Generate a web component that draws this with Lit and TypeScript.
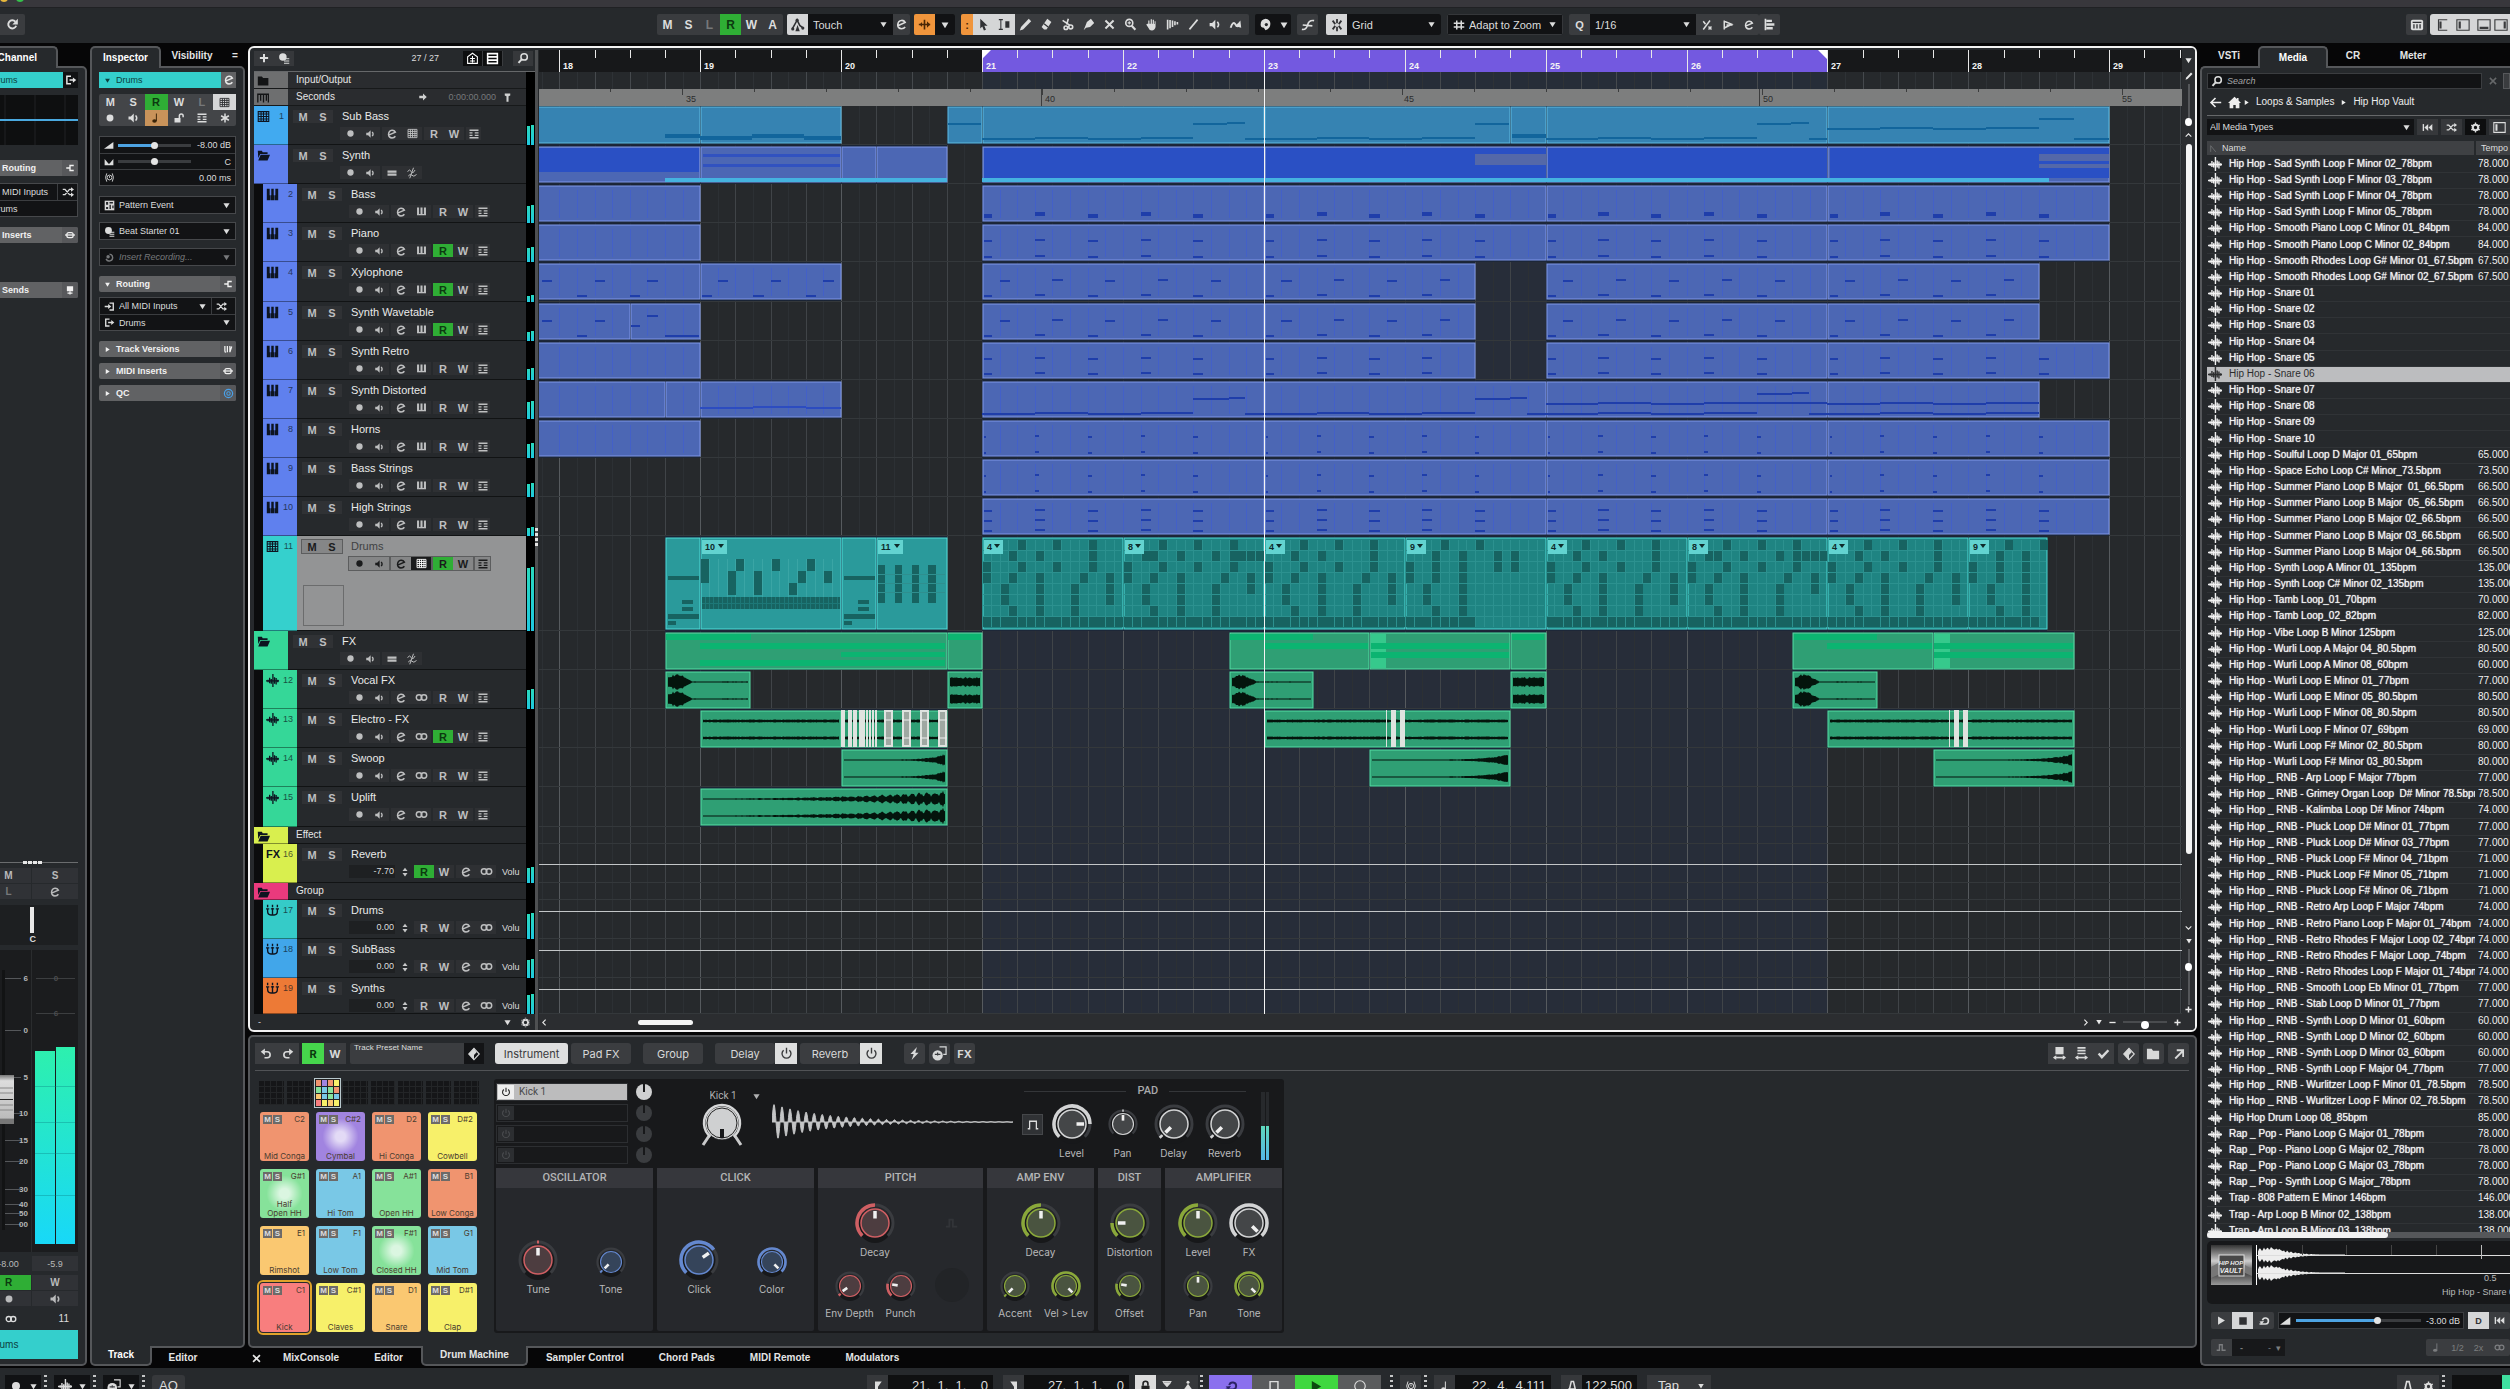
import { LitElement, html, svg, css, nothing } from "lit";
import { customElement } from "lit/decorators.js";
import { classMap } from "lit/directives/class-map.js";
import { styleMap } from "lit/directives/style-map.js";

/* ---------- icons: 16 x 16 artboard, painted in currentColor ---------- */
const st = "fill:none;stroke:currentColor;stroke-width:2";
const st1 = "fill:none;stroke:currentColor;stroke-width:1.3";
const ICONS: Record<string, any> = {
  rec: svg`<circle cx="8" cy="8" r="4.6"/>`,
  speaker: svg`<path d="M2 6h3l4-4v12l-4-4H2z"/><path d="M11.5 4.5q3 3.500 0 7" style=${st}/>`,
  edit: svg`<path d="M3.500 9.500L12.500 5.500Q11 2.800 8 3Q3.600 3.500 3.400 8.500Q3.600 13 8 13.200Q11 13.200 12.500 11" style=${st}/>`,
  keys: svg`<path d="M3 2v10.500M8 2v10.500M13 2v10.500" style="stroke:currentColor;stroke-width:3"/><path d="M1.500 12.500h13" style="stroke:currentColor;stroke-width:2"/>`,
  piano: svg`<path d="M1 1h3.500v8h.8v6H1zM6.500 1h3v8h.8v6H5.800V9h.7zM11.500 1H15v14h-4.200V9h.7z"/>`,
  grid: svg`<path d="M1.500 2h13v12h-13zM1.500 5h13M1.500 8h13M1.500 11h13M5 2v12M8 2v12M11.500 2v12" style=${st1}/>`,
  lanes: svg`<path d="M2 3h12M2 13h12M2 6.500h4M9 6.500h5M2 9.800h4M9 9.800h5" style="fill:none;stroke:currentColor;stroke-width:1.700"/>`,
  eq: svg`<path d="M2 6h12M2 10h12" style="stroke:currentColor;stroke-width:3"/>`,
  flow: svg`<path d="M2 6q3-4 5 0t5-2M3 12q3-4 5-1t6-1M10 1l-5 14" style=${st1}/>`,
  link: svg`<circle cx="5" cy="8" r="3.400" style="fill:none;stroke:currentColor;stroke-width:1.800"/><circle cx="11" cy="8" r="3.400" style="fill:none;stroke:currentColor;stroke-width:1.800"/>`,
  wave: svg`<path d="M0 8.500h16M2.500 7v3M4.500 4.500v7M6.500 6v6M8.500 0v16M10.500 4v8M12.500 5v8M14.500 7v3" style="fill:none;stroke:currentColor;stroke-width:1.600"/>`,
  fader: svg`<path d="M2 6v3q0 4.500 4 4.500h4q4 0 4-4.500V6M8 5v8M2 1v3M8 1v3M14 1v3M0 6h4M6 6h4M12 6h4" style="fill:none;stroke:currentColor;stroke-width:1.700"/>`,
  folder: svg`<path d="M1 3h5l1.500 2H14v9H1z"/>`,
  open: svg`<path d="M1 2h5l1 2h6v2H4l-2.500 5z"/><path d="M4.500 7H16l-3 7H1.500z"/>`,
  ruler: svg`<path d="M1 14V4h13v10M4.500 4v8M8 4v10M11.500 4v8" style="fill:none;stroke:currentColor;stroke-width:1.600"/>`,
  plus: svg`<path d="M8 2.500v11M2.500 8h11" style="stroke:currentColor;stroke-width:2.600"/>`,
  minus: svg`<path d="M2.500 8h11" style="stroke:currentColor;stroke-width:2.400"/>`,
  palette: svg`<circle cx="6.500" cy="6.500" r="5"/><path d="M8 9h7M8 12h7M8 15h7" style="stroke:currentColor;stroke-width:1.600"/>`,
  home: svg`<path d="M8 1L0 8.500h2V15h4.500v-4h3v4H14V8.500h2L13 5.600V2.500h-2v1.300z"/>`,
  house: svg`<path d="M8 1.500L2 6v8h12V6zM5 8h6M5 11h6M8 5v8" style=${st1}/>`,
  list: svg`<path d="M2 2h12v12H2zM2 6h12M2 10h12" style="fill:none;stroke:currentColor;stroke-width:1.900"/>`,
  search: svg`<circle cx="9.500" cy="6.500" r="4.300" style=${st}/><path d="M6.500 9.500L2 14.500" style="stroke:currentColor;stroke-width:2.600"/>`,
  zoomg: svg`<circle cx="6.500" cy="6" r="4.300" style=${st}/><path d="M9.500 9.500L14 14.500" style="stroke:currentColor;stroke-width:2.600"/><path d="M6.500 4v4M4.500 6h4" style=${st1}/>`,
  right: svg`<path d="M2 6h6V2.500L14 8l-6 5.500V10H2z"/>`,
  tee: svg`<path d="M4 2h8v3l-2.500 1v8h-3V6L4 5z"/>`,
  redo: svg`<path d="M12.500 9.500A5 5 0 1 1 11.500 4.500" style="fill:none;stroke:currentColor;stroke-width:2.400"/><path d="M14.500 1v7H7.800z"/>`,
  undoA: svg`<path d="M4 5h5.500a3.600 3.600 0 0 1 0 8H6" style="fill:none;stroke:currentColor;stroke-width:2.200"/><path d="M6.500 .5v9L1 5z"/>`,
  redoA: svg`<path d="M12 5H6.500a3.600 3.600 0 0 0 0 8H10" style="fill:none;stroke:currentColor;stroke-width:2.200"/><path d="M9.500 .5v9L15 5z"/>`,
  out: svg`<path d="M8 3H2.500v10H8M6 8h6" style=${st}/><path d="M10.500 4.500L15 8l-4.500 3.500z"/>`,
  inn: svg`<path d="M8 3h5.500v10H8M1 8h6" style=${st}/><path d="M6 4.500L10.500 8 6 11.500z"/>`,
  shuffle: svg`<path d="M1 4.500h3l6 7h3M1 11.500h3l6-7h3" style="fill:none;stroke:currentColor;stroke-width:1.800"/><path d="M12 1.500L16 4.500l-4 3zM12 8.500l4 3-4 3z"/>`,
  split: svg`<path d="M14 4H8v8h6M8 8H2" style="fill:none;stroke:currentColor;stroke-width:2.200"/>`,
  insert: svg`<rect x="3" y="4" width="10" height="8" rx="3" style=${st}/><path d="M0 8h16" style=${st}/>`,
  send: svg`<path d="M3 2h10v8H3z"/><path d="M4 13h8M8 10v5" style=${st}/>`,
  bars: svg`<path d="M3 3v8q0 2 2 2M7 3v10M11 3v10l3-9" style=${st}/>`,
  ring: svg`<circle cx="8" cy="8" r="6" style="fill:none;stroke:#4aa0e8;stroke-width:1.800"/><circle cx="8" cy="8" r="2.500" style="fill:none;stroke:#4aa0e8;stroke-width:1.500"/>`,
  note: svg`<ellipse cx="6" cy="12" rx="3" ry="2.200"/><path d="M8.500 12V2" style=${st1}/>`,
  unlock: svg`<path d="M2 8h8v6H2z"/><path d="M8.500 8V5a2.500 2.500 0 0 1 5 0v2" style=${st}/>`,
  lock: svg`<path d="M3 7h10v8H3z"/><path d="M5 7V4.500a3 3 0 0 1 6 0V7" style=${st}/>`,
  star: svg`<path d="M8 2v12M2.800 5l10.400 6M2.800 11l10.400-6" style=${st}/>`,
  ramp: svg`<path d="M0 14L15 3v11z"/>`,
  pan: svg`<path d="M1 3l5 6v4H1zM15 3v10h-5V9zM6 13V9l2 2 2-2v4z"/>`,
  delay: svg`<circle cx="8" cy="8" r="3.500" style=${st1}/><path d="M8 6v2.500M4 2Q.5 8 4 14M12 2q3.500 6 0 12" style=${st1}/>`,
  pattern: svg`<path d="M1 1h14v14H1z" style="fill:#d8d8d8"/><path d="M3 3h3v4H3zM8 3h5v2H8zM8 7h2v6H8zM3 10h3v3H3zM12 8h2v4h-2z" style="fill:#26282b"/>`,
  clock: svg`<path d="M8 3a5 5 0 1 1-5 7" style=${st}/><circle cx="6" cy="7" r="2.500"/>`,
  caret: svg`<path d="M2.500 4h11L8 13z"/>`,
  caretR: svg`<path d="M4 2.500v11L13 8z"/>`,
  auto: svg`<path d="M1.500 12.500L7 2.500l3 6 4 3" style="fill:none;stroke:currentColor;stroke-width:1.800"/><circle cx="7" cy="2.500" r="1.800"/><circle cx="2" cy="12.500" r="1.800"/><circle cx="13.500" cy="11.500" r="1.800"/><path d="M5 15l2.500-7L10 15z"/>`,
  scroll: svg`<path d="M1 8h14M8 2v12" style="stroke:currentColor;stroke-width:2"/><path d="M11 4l4 4-4 4zM5 5L2 8l3 3z"/>`,
  cursor: svg`<path d="M4 1l9 8.500H9l2 5-2.500 1-2-5L4 13z"/>`,
  range: svg`<path d="M1 2h5M1 14h5M3.500 2v12" style=${st1}/><path d="M9 4h5v8H9z"/>`,
  pencil: svg`<path d="M12 1l3 3L5 14l-4 1.500L2.500 11z"/>`,
  eraser: svg`<path d="M9 1l5 4-6 9H5L2 11z"/><path d="M5 7l5 4" stroke="#303235" stroke-width="1.500"/>`,
  scissors: svg`<path d="M2 3l9 6M9 1L7 8" style=${st}/><circle cx="12" cy="11" r="2.400" style=${st}/><circle cx="6" cy="12" r="2.200" style=${st}/>`,
  glue: svg`<path d="M11 1l4 5-5 5-5 1-3 3 2-5 2-5z"/>`,
  cross: svg`<path d="M3 3l10 10M13 3L3 13" style="stroke:currentColor;stroke-width:2.400"/>`,
  hand: svg`<path d="M4 7V3h1.500v4H7V1.500h1.500V7h1V2H11v5.500h.8V4H13v7q-1 4-4.500 4.500Q5 15 3.500 11L1.500 8 3 7z"/>`,
  comb: svg`<path d="M2 2v12M5 2.500v10M8 3v8M11 4v5M14 5v3" style=${st}/>`,
  line: svg`<path d="M3 14L13 2" style=${st}/>`,
  scrub: svg`<path d="M2 12q3-9 6-4t3-1" style="fill:none;stroke:currentColor;stroke-width:2.400"/><path d="M8 10l6-7 1 9z"/>`,
  drop: svg`<path d="M8 1Q2 2 2 8q0 4 4 4l2 3q6-2 6-8 0-5-6-6z"/><circle cx="9" cy="8" r="2" style="fill:#26282b"/>`,
  curve: svg`<path d="M1 13q5 1 6.500-5T15 3M2 8l11 1" style="fill:none;stroke:currentColor;stroke-width:1.800"/>`,
  snap: svg`<path d="M8 1v5M8 10v5M3 3l3 4M13 3l-3 4M3 13l3-4M13 13l-3-4" style=${st}/>`,
  hash: svg`<path d="M5 2v12M11 2v12M1 5.500h14M1 10.500h14" style=${st}/>`,
  frac: svg`<path d="M3 14L12 2M3 3l3 4M10 10l4 4M14 10l-4 4" style=${st}/>`,
  flag: svg`<path d="M3 2v12M3 3l10 4-10 5M6 8h8" style=${st}/>`,
  align: svg`<path d="M3 1v14" style=${st}/><path d="M4 2h7v3H4zM4 6.500h10v3H4zM4 11h8v3H4z"/>`,
  keyboard: svg`<rect x="1" y="2" width="14" height="12" rx="2"/><path d="M4.500 7v5M8 7v5M11.500 7v5M3 5h10" stroke="#303235" stroke-width="1.500"/>`,
  z1: svg`<path d="M14 2H4v12h10" style=${st1}/><path d="M5 4h2.500v8H5z"/>`,
  z2: svg`<path d="M1 2h14v12H1z" style=${st1}/><path d="M3 4h2.500v8H3z"/>`,
  z3: svg`<path d="M1 2h14v12H1z" style=${st1}/><path d="M3 10h10v2.500H3z"/>`,
  z4: svg`<path d="M1 2h14v12H1z" style=${st1}/><path d="M11 4h2.500v8H11z"/>`,
  back: svg`<path d="M8 2.500L2.500 8 8 13.500M3 8h12" style=${st}/>`,
  gear: svg`<circle cx="8" cy="8" r="4" style="fill:none;stroke:currentColor;stroke-width:3.200"/><path d="M8 .8v3M8 12.200v3M1.800 4.400l2.600 1.500M11.600 10.100l2.600 1.500M1.800 11.600l2.600-1.500M11.600 5.900l2.600-1.500" style=${st}/>`,
  rew: svg`<path d="M2 3v10" style=${st}/><path d="M9 3v10L3.500 8zM15 3v10L9.500 8z"/>`,
  sort: svg`<path d="M3 14V3l9 11" style=${st1}/>`,
  play: svg`<path d="M3 2v12l10-6z"/>`,
  stop: svg`<path d="M3 3h10v10H3z"/>`,
  loop: svg`<path d="M2 12h8a4 4 0 1 0-4-5" style="fill:none;stroke:currentColor;stroke-width:2.200"/><path d="M8 8l-6 .5 3 4z"/>`,
  steps: svg`<path d="M1 12h4V4h4v8h5" style=${st}/>`,
  power: svg`<path d="M4.500 4a5.500 5.500 0 1 0 7 0M8 1v7" style="fill:none;stroke:currentColor;stroke-width:1.700"/>`,
  bolt: svg`<path d="M11 0L3 8.500h4L4.500 16 13 7H9z"/>`,
  disc: svg`<circle cx="6" cy="10" r="5.500"/><path d="M8 1h7v8h-3" style=${st1}/><path d="M6 7v3M3 9h6" stroke="#3b3d40" stroke-width="1.300"/>`,
  cube: svg`<path d="M8 1.500l6 6.500-6 6.500L2 8z" style=${st1}/><path d="M8 1.500L2 8l6 6.500V9l3-3z"/>`,
  fit1: svg`<path d="M3 0h10v9H3z"/><path d="M1 13h14" style=${st}/><path d="M4 10v6l-4-3zM12 10v6l4-3z"/>`,
  fit2: svg`<path d="M3 1h10M3 4.500h10M3 8h10" style=${st}/><path d="M1 13h14" style=${st}/><path d="M4 10v6l-4-3zM12 10v6l4-3z"/>`,
  check: svg`<path d="M2 8l4 4.500L14 4" style="fill:none;stroke:currentColor;stroke-width:3"/>`,
  arrowNE: svg`<path d="M3 14L13 4M5 3h8.500v9" style="fill:none;stroke:currentColor;stroke-width:2.400"/>`,
  pulse: svg`<path d="M1 13h2.500V3h9v10H15" style="fill:none;stroke:currentColor;stroke-width:1.700"/>`,
  updown: svg`<path d="M4 6.500L8 1l4 5.500zM4 9.500L8 15l4-5.500z"/>`,
  lt: svg`<path d="M10 3L5 8l5 5" style=${st}/>`,
  gt: svg`<path d="M6 3l5 5-5 5" style=${st}/>`,
  up: svg`<path d="M3 10l5-5 5 5" style=${st}/>`,
  down: svg`<path d="M3 6l5 5 5-5" style=${st}/>`,
  locL: svg`<path d="M4 2h9L8 9v6H4z"/>`,
  locR: svg`<path d="M12 2H3l5 7v6h4z"/>`,
  hour: svg`<path d="M2 2h12M3 3l5 6 5-6z" style=${st1}/><path d="M3 4h10L8 9z"/>`,
  man: svg`<circle cx="8" cy="3" r="2"/><path d="M8 5l5 7H3z"/>`,
  circ: svg`<circle cx="8" cy="8" r="6" style=${st1}/>`,
  metro: svg`<path d="M4 15L7 2h3l3 13M3 12h10" style=${st}/>`,
};
const ic = (name: string, size = 12) =>
  html`<svg class="ic" width=${size} height=${size} viewBox="0 0 16 16" fill="currentColor" aria-hidden="true">${ICONS[name]}</svg>`;

/* ---------- tracks ---------- */
type Track = { n?: number; name: string; icon: string; color: string; h: number; lvl: number; kind: string; on?: boolean; val?: string; m?: number; mid?: string };
const T = (n: number | undefined, name: string, icon: string, color: string, kind: string, m = 0, o: Partial<Track> = {}): Track => ({ n, name, icon, color, h: 39, lvl: 1, kind, m, ...o });
const BL = "#5f80ee", GN = "#35d798";
const TRACKS: Track[] = [
  T(1, "Sub Bass", "grid", "#41aaf0", "inst", 20, { lvl: 0, mid: "grid" }),
  T(undefined, "Synth", "open", BL, "folder", 0, { lvl: 0 }),
  T(2, "Bass", "piano", BL, "inst", 18),
  T(3, "Piano", "piano", BL, "inst", 15, { on: true }),
  T(4, "Xylophone", "piano", BL, "inst", 7, { on: true, h: 40 }),
  T(5, "Synth Wavetable", "piano", BL, "inst", 10, { on: true }),
  T(6, "Synth Retro", "piano", BL, "inst", 12),
  T(7, "Synth Distorted", "piano", BL, "inst", 18),
  T(8, "Horns", "piano", BL, "inst", 15),
  T(9, "Bass Strings", "piano", BL, "inst", 14),
  T(10, "High Strings", "piano", BL, "inst", 9),
  T(11, "Drums", "grid", "#35d0cd", "inst", 64, { on: true, h: 95, mid: "grid" }),
  T(undefined, "FX", "open", GN, "folder", 0, { lvl: 0 }),
  T(12, "Vocal FX", "wave", GN, "audio", 20),
  T(13, "Electro - FX", "wave", GN, "audio", 0, { on: true }),
  T(14, "Swoop", "wave", GN, "audio"),
  T(15, "Uplift", "wave", GN, "audio", 0, { h: 40 }),
  T(undefined, "Effect", "open", "#d9ef4e", "head", 0, { lvl: 0, h: 17 }),
  T(16, "Reverb", "FX", "#d9ef4e", "bus", 16, { on: true, val: "-7.70" }),
  T(undefined, "Group", "open", "#ea3a7d", "head", 0, { lvl: 0, h: 17 }),
  T(17, "Drums", "fader", "#35cbc8", "bus", 26, { val: "0.00" }),
  T(18, "SubBass", "fader", "#41a6ea", "bus", 19, { val: "0.00" }),
  T(19, "Synths", "fader", "#ed7a36", "bus", 20, { val: "0.00", h: 36 }),
];

/* ---------- timeline ---------- */
const BAR = 141;
const X = (b: number) => Math.round((b - 21) * (BAR - 0.1) + 443);
const START = 17.84;
const rect = (b0: number, b1: number, y: number, h: number, fill: string) =>
  svg`<rect x=${X(b0)} y=${y} width=${Math.max(1, X(b1) - X(b0))} height=${h} fill=${fill}></rect>`;
const clip = (b0: number, b1: number, fill: string, line: string, y = 2, h = 35) => svg`
  <rect x=${X(b0)} y=${y - 2} width=${X(b1) - X(b0)} height=${h + 4} fill="#182338" opacity=".8"></rect>
  <rect x=${X(b0) + 1} y=${y} width=${X(b1) - X(b0) - 1} height=${h} fill=${fill} stroke=${line}></rect>`;
const range = (a: number, b: number, s: number) => {
  const r: number[] = [];
  for (let v = a; v < b - 0.001; v += s) r.push(v);
  return r;
};
const FOUR = [[21, 23], [23, 25], [25, 27], [27, 29]];
const SHORT = [[21, 23], [23, 24.5], [25, 27], [27, 28.5]];
const RETRO = [[21, 23], [23, 24.5], [25, 27], [27, 29]];
const BF = "#4c67b4", BLN = "#7f97e8", NOTE = "#1f3eaa";
const blueClips = (list: number[][]) => list.map(([a, b]) => svg`${clip(a, b, BF, BLN)}
  ${range(Math.ceil(a * 8) / 8 + 0.125, b, 0.125).map((v) => svg`<rect x=${X(v)} y="6" width="1" height="28" fill="#4360c8"></rect>`)}`);
const notes = (list: number[][], offs: number[], ys: number[], w: number, h: number) =>
  list.map(([a, b]) => offs.filter((o) => a + o < b - 0.01).map((o, i) => ys.map((y) =>
    rect(a + o + (o === 0 ? 0.015 : 0), a + o + w, y - (i % 2) + (h > 3 && i % 2 ? -1 : 0), h, NOTE))));
const HITS = [0, 0.375, 0.75, 1.125, 1.5];
const UPS = [0.125, 0.5, 0.875, 1.25, 1.625];

const stepLine = (a: number, y: number, h: number, fill: string, n = 4) =>
  range(0, n, 1).map((i) => rect(a + i * 0.375, a + (i + 1) * 0.375, y - (i % 2), h, fill));

const PAT: Record<string, number[][]> = {
  "4": [[4, 8, 12], [3, 6, 12], [0, 4, 8, 12], [0, 3, 6, 11, 14], [2, 6, 10, 14], [2, 6, 10, 14], [3, 6, 10], range(0, 16, 1)],
  "8": [[4, 8, 12], [2, 3, 6, 10, 12, 13, 14, 15], [0, 4, 8, 12], [0, 3, 6, 11, 14], [2, 6, 10, 14], [2, 6, 10], [3, 6, 10], range(0, 16, 1)],
  "9": [[4, 8], [3, 6, 10, 12], [0, 3, 6, 10, 12], [0, 3, 6], [2, 6], [2, 6], [3, 6], range(0, 8, 1)],
};
const CY = "#4fdcd8", DK = "#176361";
const badge = (b: number, t: string) => svg`
  <rect x=${X(b) + 2} y="4" width=${t.length > 1 ? 25 : 19} height="14" fill="#62d3d0"></rect>
  <text x=${X(b) + 5} y="14" class="patno">${t}</text>
  <path d="M${X(b) + (t.length > 1 ? 18 : 12)} 8h6l-3 4z" fill="#0e2a2a"></path>`;
const pattern = (a: number, b: number, t: string) => svg`
  ${clip(a, b, "#1f8482", CY, 2, 91)}
  ${range(0, (b - a) * 16, 1).map((i) => svg`<rect x=${X(a + i / 16)} y="4" width="1" height="87" fill="#2c918f"></rect>`)}
  ${range(1, 8, 1).map((r) => rect(a + 0.01, b - 0.01, 3 + r * 11, 1, "#2c918f"))}
  ${PAT[t].map((cols, r) => cols.filter((c) => a + c / 16 < b - 0.03).map((c) =>
    svg`<rect x=${X(a + c / 16) + 1} y=${4 + r * 11} width="8" height="10" fill=${DK}></rect>`))}
  ${badge(a, t)}`;
const mini = (a: number) => svg`
  ${clip(a, a + 0.25, "#2a9a9b", CY, 2, 91)}
  ${rect(a + 0.02, a + 0.24, 40, 4, DK)}${rect(a + 0.12, a + 0.2, 64, 4, DK)}${rect(a + 0.12, a + 0.2, 71, 4, DK)}
  ${rect(a + 0.02, a + 0.24, 78, 5, DK)}${rect(a + 0.02, a + 0.08, 85, 4, DK)}`;

const rnd = (i: number) => { const v = Math.sin(i * 91.7 + 4.1) * 4375.85; return v - Math.floor(v); };
/* symmetric waveform around y, following an envelope of the position 0..1 */
const wavePath = (x0: number, x1: number, y: number, env: (t: number) => number) => {
  const top: string[] = [], bot: string[] = [];
  for (let x = x0; x <= x1; x++) {
    const a = Math.max(0.5, env((x - x0) / (x1 - x0)) * (0.65 + 0.35 * rnd(x)));
    top.push(`${x} ${(y - a).toFixed(1)}`);
    bot.unshift(`${x} ${(y + a).toFixed(1)}`);
  }
  return `M${top.join("L")}L${bot.join("L")}z`;
};
const GF = "#2f9f74", GL = "#55dfa4", BRT = "#0cb471";
const audio = (a: number, b: number, env: (t: number) => number) => svg`
  ${clip(a, b, GF, GL, 2, 36)}
  <path d=${wavePath(X(a) + 3, X(b) - 2, 12, env)} fill="#04140c"></path>
  <path d=${wavePath(X(a) + 3, X(b) - 2, 29, env)} fill="#04140c"></path>`;
const hit = (t: number) => (t < 0.05 ? 5 : t < 0.15 ? 8 : t < 0.3 ? 8 - (t - 0.15) * 46 : 0.7);
const flat = () => 1.6;
const solid = () => 5;
const rise = (t: number) => 0.6 + 6 * Math.pow(t, 7);
const saw = (t: number) => 0.6 + 8 * Math.pow(t, 2.2) * (0.35 + 0.65 * Math.abs(Math.sin(t * 100)));
const stripe = (x: number, w: number) => svg`<rect x=${x} y="1" width=${w} height="37" fill="#dfe3df"></rect>${w > 5 ? svg`<rect x=${x + 2} y="3" width=${w - 4} height="33" fill="#9fa8a2"></rect><path d="M${x} 11h${w}M${x} 29h${w}" stroke="#eee"></path>` : nothing}`;

const LANES: Record<string, () => any> = {
  "Sub Bass1": () => [
    ...[[START, 19], [19, 20], [20.75, 21], [21, 23], [23, 24.75], [24.75, 25], [25, 27], [27, 29]].map(([a, b]) => clip(a, b, "#3683b2", "#5fbbe2", 1, 36)),
    rect(18.75, 19, 28, 4, "#12659c"), rect(19, 19.37, 30, 4, "#12659c"), rect(19.37, 19.74, 28, 4, "#12659c"), rect(19.74, 20, 30, 4, "#12659c"),
    rect(20.76, 20.99, 17, 2, "#12659c"),
    [21, 23, 25].map((b) => svg`${stepLine(b, 32, 2, "#12659c")}${rect(b + 1.5, b + 1.74, 17, 2, "#12659c")}${b === 23 ? rect(24.76, 25, 28, 4, "#12659c") : svg`${rect(b + 1.74, b + 1.87, 16, 2, "#12659c")}${rect(b + 1.87, b + 2, 32, 2, "#12659c")}`}`),
    stepLine(27, 22, 2, "#12659c"), rect(28.5, 28.75, 12, 2, "#12659c"), rect(28.75, 29, 32, 2, "#12659c"),
  ],
  Synth: () => [
    ...[[START, 19], [19, 20], [20, 20.25], [20.25, 20.75], ...FOUR].map(([a, b]) => clip(a, b, BF, BLN)),
    rect(START, 18.99, 3, 24, "#2a50c4"),
    rect(19.02, 19.99, 9, 3, "#3152c0"), rect(19.02, 19.99, 19, 3, "#3152c0"),
    ...FOUR.map(([a, b]) => rect(a + 0.015, b, 3, 30, "#2a50c4")),
    rect(24.5, 25, 9, 11, "#5468a8"), rect(28.5, 29, 9, 7, "#5468a8"), rect(28.5, 29, 19, 4, "#5468a8"),
    rect(18.75, 20.75, 33, 4, "#45b3e0"), rect(21, 28.57, 33, 4, "#45b3e0"),
  ],
  Bass: () => [blueClips([[START, 19], ...FOUR]), notes(FOUR, HITS, [30], 0.072, 4)],
  Piano: () => [blueClips([[START, 19], ...FOUR]), notes(FOUR, HITS, [17, 33], 0.072, 2)],
  Xylophone: () => [blueClips([[START, 19], [19, 20], ...SHORT]), notes(SHORT, HITS, [33], 0.072, 2), notes(SHORT, UPS, [18], 0.072, 2),
    [17.875, 18.25, 18.625, 19.125, 19.5, 19.875].map((b) => rect(b, b + 0.075, 18, 2, NOTE)), [18.125, 18.5, 19.01, 19.375, 19.75].map((b) => rect(b, b + 0.075, 33, 2, NOTE))],
  "Synth Wavetable": () => [blueClips([[START, 18.5], [18.5, 19], ...SHORT]), notes(SHORT, HITS, [33], 0.072, 2), notes(SHORT, UPS, [18], 0.072, 2),
    [17.875, 18.25].map((b) => rect(b, b + 0.075, 18, 2, NOTE)), rect(18.125, 18.2, 33, 2, NOTE), rect(18.51, 18.57, 23, 2, NOTE), rect(18.625, 18.7, 13, 2, NOTE), rect(18.75, 18.99, 33, 2, NOTE)],
  "Synth Retro": () => [blueClips([[START, 19], ...RETRO]), notes(RETRO, HITS, [17, 32], 0.072, 2)],
  "Synth Distorted": () => [blueClips([[START, 18.75], [18.75, 19], [19, 20], [21, 23], [23, 25], [25, 27], [27, 28.5]]),
    stepLine(19, 27, 2, "#2c4cc0", 2), rect(19.75, 20, 27, 2, "#2c4cc0"),
    [21, 23].map((b) => [stepLine(b, 33, 2, NOTE), rect(b + 1.5, b + 1.75, 18, 2, NOTE), rect(b + 1.75, b + 1.87, 17, 2, NOTE), rect(b + 1.87, b + 2, 33, 2, NOTE)]),
    stepLine(25, 23, 2, NOTE), rect(26.5, 27, 22, 2, NOTE), stepLine(25, 33, 2, NOTE), rect(26.5, 26.75, 13, 2, NOTE), rect(26.75, 26.87, 12, 2, NOTE), rect(26.87, 27, 33, 2, NOTE),
    stepLine(27, 23, 2, NOTE), stepLine(27, 33, 2, NOTE)],
  Horns: () => [blueClips([[START, 19], ...FOUR]), notes(FOUR, HITS, [17, 33], 0.03, 2)],
  "Bass Strings": () => [blueClips(FOUR), notes(FOUR, HITS, [17, 33], 0.03, 2)],
  "High Strings": () => [blueClips(FOUR), notes(FOUR, HITS, [13, 23, 33], 0.072, 2)],
  Drums11: () => [
    mini(18.75),
    clip(19, 20, "#2a9a9b", CY, 2, 91),
    range(1, 16, 1).map((i) => svg`<rect x=${X(19 + i / 16)} y="23" width="1" height="50" fill="#3aa5a5"></rect>`),
    [[0, 4, 8, 12], [0, 3, 6, 11, 14], [3, 6, 10]].map((cols, r) => cols.map((c) => svg`<rect x=${X(19 + c / 16) + 1} y=${23 + r * 12} width="8" height="12" fill=${DK}></rect>`)),
    rect(19.015, 19.99, 61, 12, DK), range(1, 32, 1).map((i) => svg`<rect x=${X(19 + i / 32)} y="61" width="1" height="12" fill="#1d7777"></rect>`), rect(19.015, 19.99, 67, 1, "#1d7777"),
    badge(19, "10"), mini(20), clip(20.25, 20.75, "#2a9a9b", CY, 2, 91),
    [20.265, 20.38, 20.5, 20.62].map((b) => rect(b, b + 0.05, 29, 38, DK)), [38, 47, 56].map((y) => rect(20.26, 20.74, y, 1, "#2f8f8f")), badge(20.25, "11"),
    pattern(21, 22, "4"), pattern(22, 23, "8"), pattern(23, 24, "4"), pattern(24, 25, "9"), pattern(25, 26, "4"), pattern(26, 27, "8"), pattern(27, 28, "4"), pattern(28, 28.56, "9"),
  ],
  FX: () => [
    ...[[18.75, 20.75], [20.75, 21], [22.75, 23.75], [23.75, 24.75], [24.75, 25], [26.75, 27.75], [27.75, 28.75]].map(([a, b]) => clip(a, b, GF, GL, 2, 36)),
    rect(18.76, 19.36, 3, 6, BRT), rect(19, 20.74, 12, 6, BRT), rect(20, 20.74, 21, 5, BRT), rect(19, 20.74, 29, 6, BRT), rect(20.76, 20.99, 3, 6, BRT),
    [22.75, 26.75].map((b) => [rect(b + 0.01, b + 0.6, 3, 6, BRT), rect(b + 0.25, b + 0.99, 12, 6, BRT), rect(b + 1.01, b + 1.12, 3, 34, "#36c98c"), rect(b + 1.01, b + 1.99, 12, 6, BRT), rect(b + 1.01, b + 1.99, 21, 6, BRT)]),
    rect(24.76, 24.99, 3, 6, BRT),
  ],
  "Vocal FX": () => [audio(18.75, 19.35, hit), audio(20.75, 21, solid), audio(22.75, 23.35, hit), audio(24.75, 25, solid), audio(26.75, 27.35, hit)],
  "Electro - FX": () => [audio(19, 20, flat), audio(20, 20.75, flat),
    [0, 7, 12, 18, 22, 25, 28, 31, 34].map((d) => stripe(X(20) + d, d < 19 ? 4 : 2)), [43, 61, 79, 97].map((d) => stripe(X(20) + d, 9)),
    audio(23, 24.75, flat), audio(27, 28.75, flat), [24, 28].map((b) => [stripe(X(b) - 19, 1), stripe(X(b) - 14, 5), stripe(X(b) - 5, 5)])],
  Swoop: () => [audio(20, 20.75, rise), audio(23.75, 24.75, rise), audio(27.75, 28.75, rise)],
  Uplift: () => [audio(19, 20.75, saw)],
};
const AUTO: Record<number, number> = { 16: 20, 17: 11, 18: 11, 19: 11 };

const lane = (t: Track) => {
  const fn = LANES[t.name] ?? LANES[t.name + (t.n ?? "")];
  return html`<svg class="lane" width="100%" height=${t.h} aria-label=${t.name + " lane"}>
    <rect x=${X(21)} width=${X(27) - X(21)} height=${t.h} fill="#272d39"></rect>
    ${range(17.875, 29.6, 0.125).map((b) => {
      const k = Math.round(b * 8) % 8;
      return svg`<rect x=${X(b)} width="1" height=${t.h} fill=${k === 0 ? "#565a5e" : k % 2 === 0 ? "#404448" : "#2c3034"}></rect>`;
    })}
    <rect y=${t.h - 1} width="100%" height="1" fill="#34383b"></rect>
    ${fn ? fn() : nothing}
    ${t.n && AUTO[t.n] ? svg`<rect y=${AUTO[t.n]} width="100%" height="1" fill="#c3c6c8"></rect>` : nothing}
    <rect x=${X(23)} width="1" height=${t.h} fill="#f4f4f4"></rect>
  </svg>`;
};

/* ---------- media rows ---------- */
const MEDIA: [string, string][] = [];
const add = (pre: string, rows: string) => rows.split("|").forEach((r) => { const [a, b] = r.split("~"); MEDIA.push([pre + a, b ?? ""]); });
add("Hip Hop - ", "Sad Synth Loop F Minor 02_78bpm~78.000|Sad Synth Loop F Minor 03_78bpm~78.000|Sad Synth Loop F Minor 04_78bpm~78.000|Sad Synth Loop F Minor 05_78bpm~78.000|Smooth Piano Loop C Minor 01_84bpm~84.000|Smooth Piano Loop C Minor 02_84bpm~84.000|Smooth Rhodes Loop G# Minor 01_67.5bpm~67.500|Smooth Rhodes Loop G# Minor 02_67.5bpm~67.500|Snare 01|Snare 02|Snare 03|Snare 04|Snare 05|Snare 06|Snare 07|Snare 08|Snare 09|Snare 10|Soulful Loop D Major 01_65bpm~65.000|Space Echo Loop C# Minor_73.5bpm~73.500|Summer Piano Loop B Major  01_66.5bpm~66.500|Summer Piano Loop B Major  05_66.5bpm~66.500|Summer Piano Loop B Major 02_66.5bpm~66.500|Summer Piano Loop B Major 03_66.5bpm~66.500|Summer Piano Loop B Major 04_66.5bpm~66.500|Synth Loop A Minor 01_135bpm~135.000|Synth Loop C# Minor 02_135bpm~135.000|Tamb Loop_01_70bpm~70.000|Tamb Loop_02_82bpm~82.000|Vibe Loop B Minor 125bpm~125.000|Wurli Loop A Major 04_80.5bpm~80.500|Wurli Loop A Minor 08_60bpm~60.000|Wurli Loop E Minor 01_77bpm~77.000|Wurli Loop E Minor 05_80.5bpm~80.500|Wurli Loop F Minor 08_80.5bpm~80.500|Wurli Loop F Minor 07_69bpm~69.000|Wurli Loop F# Minor 02_80.5bpm~80.000|Wurli Loop F# Minor 03_80.5bpm~80.000");
add("Hip Hop _ RNB - ", "Arp Loop F Major 77bpm~77.000|Grimey Organ Loop  D# Minor 78.5bpm~78.500|Kalimba Loop D# Minor 74bpm~74.000|Pluck Loop D# Minor 01_77bpm~77.000|Pluck Loop D# Minor 03_77bpm~77.000|Pluck Loop F# Minor 04_71bpm~71.000|Pluck Loop F# Minor 05_71bpm~71.000|Pluck Loop F# Minor 06_71bpm~71.000|Retro Arp Loop F Major 74bpm~74.000|Retro Piano Loop F Major 01_74bpm~74.000|Retro Rhodes F Major Loop 02_74bpm~74.000|Retro Rhodes F Major Loop_74bpm~74.000|Retro Rhodes Loop F Major 01_74bpm~74.000|Smooth Loop Eb Minor 01_77bpm~77.000|Stab Loop D Minor 01_77bpm~77.000|Synth Loop D Minor 01_60bpm~60.000|Synth Loop D Minor 02_60bpm~60.000|Synth Loop D Minor 03_60bpm~60.000|Synth Loop F Major 04_77bpm~77.000|Wurlitzer Loop F Minor 01_78.5bpm~78.500|Wurlitzer Loop F Minor 02_78.5bpm~78.500");
add("", "Hip Hop Drum Loop 08_85bpm~85.000|Rap _ Pop - Piano Loop G Major 01_78bpm~78.000|Rap _ Pop - Piano Loop G Major 02_78bpm~78.000|Rap _ Pop - Piano Loop G Major 03_78bpm~78.000|Rap _ Pop - Synth Loop G Major_78bpm~78.000|Trap - 808 Pattern E Minor 146bpm~146.000|Trap - Arp Loop B Minor 02_138bpm~138.000|Trap - Arp Loop B Minor 03_138bpm~138.000");

/* ---------- pads ---------- */
const PC: Record<string, string> = { o: "#f0946f", p: "#a184e0", y: "#f7f06a", g: "#86e29a", b: "#79c8e6", a: "#fac871", r: "#f87e7e" };
const PADS: [string, string, string, boolean?][] = [
  ["C2", "Mid Conga", "o"], ["C#2", "Cymbal", "p", true], ["D2", "Hi Conga", "o"], ["D#2", "Cowbell", "y"],
  ["G#1", "Half\nOpen HH", "g", true], ["A1", "Hi Tom", "b"], ["A#1", "Open HH", "g"], ["B1", "Low Conga", "o"],
  ["E1", "Rimshot", "a"], ["F1", "Low Tom", "b"], ["F#1", "Closed HH", "g", true], ["G1", "Mid Tom", "b"],
  ["C1", "Kick", "r"], ["C#1", "Claves", "y"], ["D1", "Snare", "a"], ["D#1", "Clap", "y"],
];

/* ---------- knob ---------- */
const pt = (r: number, deg: number) => { const a = (deg * Math.PI) / 180; return `${(r * Math.sin(a)).toFixed(2)} ${(-r * Math.cos(a)).toFixed(2)}`; };
const arc = (r: number, a: number, b: number) => `M${pt(r, a)}A${r} ${r} 0 ${b - a > 180 ? 1 : 0} 1 ${pt(r, b)}`;
const KC: Record<string, [string, string]> = { red: ["#cf5f63", "#4d3d40"], blue: ["#6488cf", "#35445a"], green: ["#8aa83a", "#4a5440"], white: ["#d2d3d4", "#444648"] };
const knob = (label: string, color: string, deg: number, small = false, bi = false, span = false) => {
  const [c, body] = KC[color];
  const size = small ? 30 : 40;
  return html`<label class=${classMap({ knob: true, span, small })}>
    <svg width=${size} height=${size} viewBox="-20 -20 40 40" aria-hidden="true">
      <circle cy="3" r="17" fill="#17181a"></circle>
      <path d=${arc(18, -135, 135)} fill="none" stroke="#3a3c40" stroke-width="3"></path>
      ${bi ? svg`<path d="M0 -19.500V-16.500" stroke=${c} stroke-width="2"></path>` : deg <= -130 ? svg`<path d=${arc(18, -138, -130)} fill="none" stroke=${c} stroke-width="4"></path>` : svg`<path d=${arc(18, -135, deg)} fill="none" stroke=${c} stroke-width="3.500"></path>`}
      <circle r="14" fill=${body} stroke=${c} stroke-width="1.500"></circle>
      <path d="M${pt(4.5, deg)}L${pt(12, deg)}" stroke="#f0f0f0" stroke-width="3.500"></path>
    </svg>
    <input type="range" min="-135" max="135" .value=${String(deg)} aria-label=${label}>
    <span>${label}</span>
  </label>`;
};

const b = (content: any, label: string, cls = "") => html`<button class=${"b " + cls} aria-label=${label}>${content}</button>`;
const sel = (label: string, value: string, cls = "") => html`<span class=${"sel " + cls}><select aria-label=${label}><option>${value}</option></select>${ic("caret", 9)}</span>`;

@customElement("app-root")
export class AppRoot extends LitElement {
  static styles = css`
    * { box-sizing: border-box; }
    :host { display: flex; flex-direction: column; height: 100vh; overflow: hidden; background: #060607; color: #dcdddd;
      font: 9px/12px "Liberation Sans", Arial, sans-serif; }
    button, input, select { font: inherit; color: inherit; background: none; border: 0; padding: 0; margin: 0; border-radius: 0; outline: 0; }
    svg { display: block; flex: none; }
    .b { display: inline-flex; align-items: center; justify-content: center; flex: none; white-space: nowrap; }
    .row { display: flex; align-items: center; }
    .grow { flex: 1; min-width: 0; }
    a { color: inherit; text-decoration: none; }
    .sel { display: flex; align-items: center; min-width: 0; }
    .sel select { appearance: none; flex: 1; min-width: 0; }

    .title { height: 8px; background: #38373c; border-bottom: 1px solid #202124; overflow: hidden; flex: none; }
    .lights { display: flex; gap: 8px; }
    .lights i { width: 8px; height: 8px; border-radius: 50%; margin-top: -6px; background: #e8b83c; }
    .lights i + i { background: #35c24b; }

    /* toolbar */
    .tools { height: 35px; flex: none; background: #26292c; display: flex; align-items: center; font-size: 11px; padding-bottom: 2px; }
    .tools .g { display: flex; height: 21px; background: #3a3c3f; border-radius: 2px; overflow: hidden; }
    .tools .b { width: 21px; height: 21px; }
    .tools .bold { font-weight: bold; font-size: 12px; }
    .tools .first { width: 25px; height: 21px; background: #3a3c3f; border-radius: 0 2px 2px 0; }
    .white, .tools .g.white { background: #d5d6d7; color: #303134; }
    .black, .tools .g.black { background: #111214; }
    .green { background: #2fae35; color: #0c3a10; }
    .orange { background: #f0953c; color: #4a2606; }
    .dim { color: #76787a; }
    .tools .sel { height: 21px; background: #111214; padding: 0 5px; gap: 4px; }
    .toolset { display: flex; margin-left: 632px; }
    .s4 { margin-left: 4px; } .s6 { margin-left: 6px; } .s8 { margin-left: 8px; } .s10 { margin-left: 10px; }
    .w-touch { width: 85px; } .w-grid { width: 94px; } .tools .w-adapt { width: 116px; border: 1px solid #35373a; } .w-q { width: 106px; }
    .tools .nar { width: 12px; } .tools .e { width: 17px; } .tools .dd { width: 20px; } .tools .d15 { width: 15px; }
    .tools .toolbox { padding-right: 3px; }
    .right { display: flex; margin-left: auto; gap: 3px; }
    .right .g.white { border-radius: 3px 0 0 3px; padding-left: 1px; }
    .right .white .b { color: #3a3b3d; width: 21px; }
    .right .white .b:last-child { width: 16px; justify-content: flex-start; }

    /* frame */
    .main { flex: 1; min-height: 0; display: grid; grid-template-columns: 87px 155px minmax(0, 1fr) 310px; column-gap: 3px; padding: 3px 0 2px; }
    .main > * { min-width: 0; min-height: 0; }
    .tabs { display: flex; font-weight: bold; font-size: 10px; color: #e4e5e5; height: 20px; }
    .tabs .b { height: 20px; }
    .tabs .on { background: #26292c; border: 2px solid #55575a; border-bottom: 0; border-radius: 5px 5px 0 0; margin-bottom: -2px; height: 22px; z-index: 1; color: #fff; }
    .panel { background: #26292c; border: 2px solid #55575a; border-radius: 0 5px 5px 5px; }

    /* channel strip */
    .chan { display: flex; flex-direction: column; overflow: hidden; }
    .chan > * { flex: none; align-self: flex-end; width: 120px; }
    .chan > .panel { flex: 1; display: flex; flex-direction: column; padding: 4px 7px 5px; min-height: 0; }
    .chan .tabs .on { width: 91px; justify-content: flex-end; padding-right: 19px; }
    .strip { display: flex; height: 16px; color: #0c4140; }
    .strip .nm { flex: 1; background: #34cfcc; display: flex; align-items: center; padding: 0 5px; gap: 5px; }
    .chan .strip .nm { padding-left: 15px; }
    .strip .b { width: 15px; background: #111214; color: #e6e6e6; }
    .strip .b.lite { background: #616264; }
    .eq { height: 50px; margin-top: 7px; background: repeating-linear-gradient(90deg, #0e0f10 0 28px, #17181a 28px 30px); display: flex; align-items: center; }
    .eq i { flex: 1; height: 2px; background: #4aa9df; }
    .sec { display: flex; align-items: center; gap: 5px; height: 16px; background: #616264; border-radius: 2px; font-weight: bold; padding: 0 0 0 5px; color: #f1f1f1; width: 100%; }
    .sec .t { flex: 1; text-align: left; }
    .sec .x { width: 16px; height: 16px; background: #57585b; display: grid; place-items: center; border-radius: 0 2px 2px 0; }
    .chan .sec { justify-content: flex-end; padding-left: 26px; }
    .mt15 { margin-top: 15px; } .mt7 { margin-top: 7px; } .mt8 { margin-top: 8px; } .mt10 { margin-top: 10px; } .mt6 { margin-top: 6px; } .mt39 { margin-top: 39px; } .mt5 { margin-top: 5px; }
    .box { border: 1px solid #46484b; background: #121315; }
    .box .r { display: flex; align-items: center; height: 16px; padding: 0 4px; gap: 4px; }
    .box .r + .r { border-top: 1px solid #3b3d40; }
    .box .b { width: 20px; height: 16px; border-left: 1px solid #3b3d40; }
    .box .sel { flex: 1; gap: 2px; }
    .cbox .r { padding: 0 0 0 25px; } .cbox .r + .r { padding-left: 14px; }
    .drag { margin-top: auto; height: 4px; display: flex; align-items: center; justify-content: center; gap: 1px; background: linear-gradient(#6a6c6e, #6a6c6e) center / 100% 1px no-repeat; padding-left: 10px; }
    .drag i { width: 4px; height: 3px; background: #e8e8e8; }
    .cells { display: grid; grid-template-columns: 1fr 46px; gap: 1px; margin-top: 4px; font-weight: bold; font-size: 10px; color: #b9babb; }
    .cells > * { background: #303236; height: 15px; display: grid; place-items: center; padding-left: 0; }
    .cells > :nth-child(odd) { padding-left: 10px; }
    .cells .green { background: #2fae35; color: #0c3a10; }
    .cells .val { font-weight: normal; font-size: 9px; }
    .cells .val:nth-child(odd) { background: none; }
    .panbox { margin-top: 6px; height: 40px; background: #1d1f21; display: flex; flex-direction: column; align-items: flex-end; padding-right: 42px; font-weight: bold; }
    .panbox i { width: 4px; height: 26px; background: #e8e8e8; margin: 2px 2px 0 0; }
    .fad { margin-top: 5px; height: 302px; background: #1b1c1e; display: flex; justify-content: flex-end; }
    .fad text { font: bold 8px "Liberation Sans", sans-serif; fill: #b5b6b7; }
    .num { display: flex; justify-content: flex-end; align-items: center; gap: 42px; height: 22px; padding-right: 9px; font-size: 10px; margin-top: 2px; }
    .foot { height: 29px; background: #34cfcc; color: #0c4140; font-size: 10px; display: flex; align-items: center; padding-left: 13px; }

    /* inspector */
    .insp { display: flex; flex-direction: column; }
    .insp .panel { flex: 1; padding: 4px 7px; border-radius: 0 5px 5px 0; }
    .insp .tabs .on { width: 71px; } .insp .tabs .mid { width: 62px; } .insp .tabs .menu { margin-left: auto; width: 20px; }
    .insp .tabs.low .on, .lowtabs .on { background: #26292c; border: 2px solid #55575a; border-top: 0; border-radius: 0 0 5px 5px; margin: -2px 0 0; height: 20px; }
    .insp .tabs.low { height: 18px; } .insp .tabs.low .on { width: 62px; }
    .ibtn { display: grid; grid-template-columns: repeat(6, 1fr); margin-top: 6px; background: #434548; font-weight: bold; font-size: 11px; border-radius: 2px; }
    .ibtn .b { height: 16px; }
    .tan { background: #c9935a; color: #3a2408; }
    .insp input[type="range"], .vol input { appearance: none; flex: 1; min-width: 0; width: 60px; height: 8px; background: linear-gradient(#3a3c3f, #3a3c3f) center / 100% 3px no-repeat; }
    .insp input[type="range"].fill { background: linear-gradient(90deg, #4da3e2 50%, #3a3c3f 50%) center / 100% 3px no-repeat; }
    .vol input { background: linear-gradient(90deg, #4da3e2 66%, #3a3c3f 66%) center / 100% 3px no-repeat; }
    input::-webkit-slider-thumb { appearance: none; width: 7px; height: 7px; border-radius: 50%; background: #e4e4e4; }
    .box .v { width: 36px; text-align: right; white-space: nowrap; }
    .ital { font-style: italic; color: #77797b; }

    /* project window */
    .center { display: flex; flex-direction: column; gap: 3px; }
    .project { flex: 1; min-height: 0; border: 2px solid #f2f2f2; border-radius: 6px; background: #26292c; display: grid; grid-template-columns: 281px 4px minmax(0, 1fr) 13px; padding-left: 4px; overflow: hidden; }
    .list { display: flex; flex-direction: column; min-height: 0; }
    .lhead { height: 24px; display: flex; align-items: center; border-bottom: 1px solid #66686a; padding: 0 2px 3px 0; flex: none; }
    .lhead .b { width: 20px; height: 15px; background: #36383b; }
    .lhead .b.black { background: #0d0e0f; border-right: 1px solid #3a3c3f; color: #fff; }
    .cnt { margin-left: auto; margin-right: 24px; }
    .io { display: flex; height: 17px; font-size: 10px; background: #2a2c2f; border-bottom: 1px solid #17191a; flex: none; }
    .io .k { width: 34px; background: #6e6f70; color: #131415; padding-left: 3px; display: flex; align-items: center; }
    .io .l { flex: 1; padding: 2px 0 0 8px; color: #e6e6e6; }
    .io .tc { font-size: 9px; color: #77797b; padding-top: 2px; margin: 0 4px 0 18px; }
    .io .b { width: 14px; color: #cfd0d0; }
    .mt { width: 9px; background: #000; display: flex; align-items: flex-end; gap: 1px; padding-left: 1px; flex: none; }
    .io .mt { margin-left: 12px; margin-bottom: -1px; }
    .io .mt.only { margin-left: 0; }
    .mt i { width: 3px; background: linear-gradient(#2ad9bd, #1fc8e0); }
    .trk { display: flex; flex: none; overflow: hidden; }
    .trk .body { flex: 1; display: flex; border-bottom: 1px solid #111314; min-width: 0; position: relative; }
    .in { width: 9px; background: #0b0c0d; flex: none; }
    .tag { width: 34px; flex: none; display: flex; justify-content: space-between; padding: 4px 4px 0 3px; color: #0d1420; border-bottom: 1px solid rgba(0, 0, 0, 0.4); }
    .tag b { font: bold 11px/12px "Liberation Sans", sans-serif; }
    .tag span { opacity: 0.7; }
    .ms { display: flex; height: 13px; margin: 4px 7px 0 5px; background: #303235; }
    .ms .b, .bt .b { width: 20px; height: 13px; font-weight: bold; font-size: 11px; color: #bebfc0; }
    .nfo { flex: 1; min-width: 0; display: flex; flex-direction: column; }
    .nm1 { font-size: 11px; line-height: 13px; padding: 4px 0 0 2px; color: #e9e9e9; }
    .bt { display: flex; gap: 2px; margin-top: 4px; align-items: center; }
    .bt .gg { display: flex; background: #2e3033; }
    .bt .gg.one .b { width: 15px; }
    .bt .b.green { color: #0c3a10; }
    .bt .vv { width: 46px; text-align: right; padding-right: 1px; background: #1e2022; height: 13px; }
    .bt .ud { width: 15px; display: grid; place-items: center; color: #c6c7c8; }
    .bt .vo { margin-left: 4px; }
    .head .body { padding-left: 8px; font-size: 10px; color: #e6e6e6; align-items: center; }
    .head .tag { padding-top: 3px; }
    .sel1 .body { background: #939495; }
    .sel1 .ms, .sel1 .gg { background: #858687; outline: 1px solid #5c5d5e; }
    .sel1 .ms .b, .sel1 .bt .b { color: #1a1b1c; }
    .sel1 .bt .b.inv { background: #1a1b1c; color: #fff; }
    .sel1 .nm1 { color: #404142; }
    .pic { position: absolute; left: 6px; top: 49px; width: 41px; height: 41px; border: 1px solid #6b6c6d; }
    .lfoot { height: 16px; display: flex; align-items: center; gap: 8px; color: #7d7f81; padding: 0 4px; }
    .lfoot :first-child { flex: 1; color: #ddd; }
    .div { background: #4e5052; margin: 2px 1px 0 0; display: flex; flex-direction: column; gap: 2px; align-items: center; padding-top: 478px; overflow: hidden; }
    .div i { width: 3px; height: 3px; background: #e4e4e4; flex: none; }
    .time { display: flex; flex-direction: column; min-width: 0; overflow: hidden; }
    .ruler text { font: bold 9px "Liberation Sans", sans-serif; fill: #f4f4f4; }
    .ruler .s { font-weight: normal; fill: #2b2c2d; }
    .patno { font: bold 9px "Liberation Sans", sans-serif; fill: #0e2a2a; }
    .hs { height: 16px; display: flex; align-items: center; padding-left: 1px; background: #2b2d30; color: #e8e8e8; gap: 5px; }
    .hs .track { flex: 1; }
    .hs .thumb { display: block; width: 55px; height: 5px; border-radius: 3px; background: #f4f4f4; margin-left: 84px; }
    .hs .zs { width: 44px; height: 2px; background: #4a4c4f; display: grid; place-items: center; margin: 0 1px; }
    .dot { width: 8px; height: 8px; border-radius: 50%; background: #fff; flex: none; }
    .vs { display: flex; flex-direction: column; align-items: center; color: #e8e8e8; padding: 8px 1px 16px; background: #2b2d30; }
    .vs .zl { width: 2px; height: 34px; background: #55575a; margin-top: 4px; }
    .vs .zl.a { height: 14px; } .vs .zl.c { height: 34px; margin: 0; }
    .vs .dot { width: 7px; }
    .vs .thumb { width: 6px; border-radius: 3px; background: #f4f4f4; height: 710px; margin-top: 4px; }

    /* lower zone */
    .lower { flex: none; }
    .lz { height: 313px; border-radius: 5px; padding: 6px 6px 0 5px; }
    .lbar { display: flex; height: 28px; border-bottom: 1px solid #515356; font: 11px/14px Inter, sans-serif; align-items: flex-start; }
    .lbar .b { height: 21px; background: #3b3d40; color: #d8d9d9; }
    .lbar .b.white { background: #dedfdf; color: #3a3b3d; } .lbar .b.g2 { background: #46d64c; color: #0a3a0e; }
    .lbar .sq { width: 21px; border-radius: 3px; margin-left: 4px; }
    .lbar .l21 { width: 22px; font-weight: bold; }
    .preset { width: 134px; height: 21px; background: #3b3d40; margin-left: 4px; border-radius: 2px; display: flex; font: 8px/10px "Liberation Sans", sans-serif; padding-left: 4px; }
    .preset span { flex: 1; } .lbar .preset .b { width: 20px; background: #131416; }
    .lbar .m11 { margin-left: 11px; } .lbar .m3 { margin-left: 3px; } .lbar .m12 { margin-left: 12px; } .lbar .m22 { margin-left: 22px; }
    .w73 { width: 73px; border-radius: 3px; } .w60 { width: 60px; border-radius: 3px; }
    .lbody { display: flex; gap: 12px; }
    .pads { width: 227px; padding: 7px 3px 0 4px; }
    .banks { display: grid; grid-template-columns: repeat(8, 1fr); gap: 3px; height: 30px; align-items: center; }
    .bank { height: 24px; background: repeating-linear-gradient(transparent 0 5px, #232527 5px 6px), repeating-linear-gradient(90deg, #151618 0 5px, #232527 5px 6px); }
    .bank.cur { background: #222; outline: 1px solid #b8c8cc; display: grid; grid-template-columns: repeat(4, 1fr); gap: 1px; padding: 1px; height: 28px; }
    .padg { display: grid; grid-template-columns: repeat(4, 49px); gap: 8px 7px; margin: 4px 0 0 1px; }
    .pad { height: 49px; border-radius: 3px; display: flex; flex-direction: column; justify-content: space-between; font: 8px/9px Inter, sans-serif; color: #4a3c30; padding: 3px 2px 0; }
    .pad .tp { display: flex; align-items: center; gap: 1px; padding: 0 2px 0 1px; align-self: stretch; }
    .pad .tp i { font: bold 8px/9px "Liberation Sans", sans-serif; background: #6d6a68; color: #ddd; width: 9px; height: 9px; text-align: center; }
    .pad .tp span { margin-left: auto; }
    .pad .pn { white-space: pre; text-align: center; align-self: center; }
    .pad.glow { background-image: radial-gradient(circle at 50% 50%, rgba(255, 255, 255, 0.7) 0 14%, transparent 52%); }
    .pad.cur { outline: 2px solid #e0a32a; outline-offset: 1px; }
    .synth { width: 790px; background: #18191b; margin-top: 8px; padding: 3px 2px 2px; border-radius: 3px; }
    .top { display: flex; height: 86px; }
    .slots { width: 156px; display: flex; flex-direction: column; gap: 3px; padding-top: 1px; }
    .slot { display: flex; align-items: center; gap: 8px; height: 18px; }
    .slot .sb { width: 135px; height: 18px; border: 1px solid #2c2e31; display: flex; align-items: center; gap: 5px; color: #4a4c4f; font: 10px/12px Roboto, sans-serif; }
    .slot .sb .p { width: 16px; height: 14px; margin-left: 1px; background: #2c2e31; display: grid; place-items: center; }
    .slot.on .sb { background: #bcbcbd; color: #48494b; } .slot.on .p { background: #eee; color: #222; }
    .osc { width: 100px; margin-left: 20px; display: flex; flex-direction: column; align-items: center; padding-top: 8px; }
    .osc .sel { font: 10px/12px Roboto, sans-serif; color: #b0b1b2; gap: 14px; margin-left: 26px; }
    .padpart { margin-left: auto; width: 262px; padding-top: 2px; }
    .ptitle { display: flex; align-items: center; gap: 11px; font: 500 11px/14px Roboto, sans-serif; color: #a9aaab; padding: 0 36px 0 4px; }
    .ptitle i { flex: 3; height: 1px; background: #343639; } .ptitle i:first-child { flex: 4; }
    .prow { display: flex; height: 68px; }
    .prow .b { width: 21px; height: 21px; background: #303235; border: 1px solid #45474a; margin: 16px 3px 0 2px; }
    .vm { width: 8px; margin: -6px 0 0 11px; height: 68px; display: flex; gap: 1px; }
    .vm i { flex: 1; background: linear-gradient(#27292c 50%, #5fd8bd 50%, #54b6e8); }
    .wv { margin-top: 19px; }
    .knob { display: flex; flex-direction: column; align-items: center; position: relative; width: 51px; font: 10px/14px Inter, sans-serif; color: #b9babb; white-space: nowrap; }
    .knob svg { height: 40px; } .knob.small svg { height: 36px; }
    .knob span { margin-top: 2px; display: block; }
    .knob input { position: absolute; inset: 0; opacity: 0; width: 100%; height: 40px; }
    .prow .knob.small svg { height: 40px; } .prow .knob { margin-top: 6px; }
    .secs { display: grid; grid-template-columns: 157px 157px 165px 107px 63px 1fr; gap: 4px; }
    .sc { background: #26282c; height: 163px; border-radius: 2px; }
    .sc h3 { margin: 0; height: 20px; font: 500 11px/20px Roboto, sans-serif; text-align: center; background: #36373c; color: #b4b5b6; }
    .kg { display: grid; justify-content: center; align-content: start; row-gap: 9px; padding-top: 15px; }
    .k1 { grid-template-columns: 51px; } .k2 { grid-template-columns: 51px 51px; } .k3 { grid-template-columns: 51px 51px 51px; }
    .kr { display: flex; justify-content: space-around; align-items: flex-end; padding: 52px 6px 0; }
    .kg .span { grid-column: span 2; width: 102px; }
    .ghost { color: #323438; display: grid; place-items: center; height: 40px; } .ghost.c { width: 34px; height: 34px; border-radius: 50%; background: #222427; justify-self: center; }
    .lowtabs { display: flex; height: 18px; font-weight: bold; font-size: 10px; color: #e4e5e5; gap: 1px; }
    .lowtabs .b { padding: 0 17px; height: 20px; } .lowtabs .x { padding: 0 3px; }

    /* media */
    .media { overflow: hidden; display: flex; flex-direction: column; }
    .media .tabs .b { width: 58px; } .media .tabs .b.on { width: 70px; } .media .tabs .cr { width: 50px; } .media .tabs .me { width: 70px; }
    .mp { flex: 1; min-height: 0; display: flex; flex-direction: column; border-right: 0; border-radius: 5px 0 0 5px; padding: 5px 0 8px 5px; }
    .mp > * { flex: none; }
    .sr { display: flex; align-items: center; height: 16px; gap: 5px; }
    .sr label { display: flex; align-items: center; gap: 4px; width: 275px; height: 16px; border: 1px solid #3b3d40; background: #121315; padding: 0 3px; }
    .sr input { flex: 1; font-style: italic; min-width: 0; } .sr input::placeholder { color: #a5a6a7; }
    .sr .b { width: 11px; color: #66686a; } .sr .z { flex: 1; height: 16px; background: #3a3c3f; border: 1px solid #56585b; }
    .crumb { display: flex; align-items: center; gap: 6px; font-size: 10px; height: 27px; border-bottom: 1px solid #66686a; color: #eee; padding-left: 2px; }
    .crumb .g0 { gap: 2px; display: flex; align-items: center; }
    .ft { display: flex; gap: 3px; margin-top: 3px; height: 16px; }
    .ft .sel { width: 221px; background: #121315; padding: 0 3px; } .ft .b { width: 21px; background: #36383b; } .ft .b.black { background: #0d0e0f; }
    .tw.tw { flex: 1; min-height: 0; overflow: hidden; margin-top: 6px; }
    table { border-collapse: collapse; table-layout: fixed; width: 100%; }
    th { background: #3f4144; font-weight: normal; text-align: left; height: 14px; padding: 0; border-right: 2px solid #26292c; }
    th .row { gap: 4px; padding-left: 2px; } th + th { padding-left: 5px; border: 0; }
    tbody::before { content: ""; display: block; height: 1px; }
    td { height: 16px; padding: 0; border-bottom: 1px solid #303336; font-size: 10px; line-height: 12px; color: #f2f2f2; text-shadow: 0 0 1px #f2f2f2; white-space: pre; overflow: hidden; }
    tr:nth-child(6n) td { height: 17px; }
    td .row { gap: 7px; padding-left: 1px; height: 14px; } td + td { padding-left: 3px; text-shadow: none; }
    tr.cur td { background: #bcbdbf; color: #2c2d2e; text-shadow: none; }
    .c1 { width: 268px; }
    .ms2 { height: 6px; background: #55575a; margin-bottom: 3px; } .ms2 i { display: block; width: 181px; height: 6px; border-radius: 3px; background: #f2f2f2; }
    .prev { height: 63px; background: #17181a; border-radius: 5px 0 0 5px; padding: 4px; display: flex; gap: 3px; overflow: hidden; }
    .prev text { font: 9px "Liberation Sans", sans-serif; fill: #b9babb; }
    .cover .ct { font: italic bold 6px "Liberation Sans", sans-serif; fill: #eee; } .cover .ct.big { font-size: 7px; }
    .pl { display: flex; margin: 8px 0 0 4px; height: 17px; gap: 4px; }
    .pl .gr { display: flex; background: #3b3d40; border-radius: 2px; } .pl .b { width: 21px; height: 17px; }
    .vol { display: flex; align-items: center; width: 195px; border: 1px solid #3b3d40; background: #121315; gap: 5px; padding: 0 3px 0 1px; }
    .pl.z { margin-top: 10px; justify-content: space-between; color: #7b7d7f; } .pl .hb { background: #17181a; width: 53px; display: flex; align-items: center; justify-content: space-between; padding: 0 4px 0 8px; }

    /* transport */
    .trans { height: 21px; flex: none; background: #26292c; display: flex; padding-top: 7px; overflow: hidden; font-size: 13px; }
    .trans .b { height: 22px; width: 21px; background: #36383b; color: #dcdcdc; }
    .trans .b.white { background: #dcdcdc; color: #222; } .trans .b.big { width: 43px; }
    .num1 { width: 105px; height: 22px; background: #0f1011; display: flex; align-items: center; justify-content: flex-end; padding-right: 5px; white-space: pre; }
    .num1.pos { width: 96px; } .num1.bpm { width: 55px; }
    .tg { display: flex; } .tg.l { margin-left: 5px; } .tg.m { margin-left: 682px; } .tg.e { margin-left: auto; }
    .trans .b.purple { background: #8a70ee; color: #2b2266; } .trans .b.play { background: #3fd83f; color: #0c4a10; } .trans .b.gry { background: #5a5b5d; }
    .dots { width: 3px; background: repeating-linear-gradient(#c5c6c7 0 2px, transparent 2px 5px); margin: 0 7px 0 3px; }
    .dots.in2 { margin: 0 6px 0 2px; }
    .aq { border-radius: 3px; } .trans .w33 { width: 33px; } .trans .w35 { width: 36px; gap: 6px; background: #111214; }
    .out { flex: none; width: 58px; background: linear-gradient(90deg, #0f1011 50px, #3fe0a0 50px); }
  `;

  tracks() {
    return TRACKS.map((t) => {
      const meter = html`<div class="mt">${t.m ? html`<i style=${styleMap({ height: t.m - 1 + "px" })}></i><i style=${styleMap({ height: t.m + "px" })}></i>` : nothing}</div>`;
      const tag = html`${t.lvl ? html`<div class="in"></div>` : nothing}
        <div class="tag" style=${styleMap({ background: t.color })}>${t.icon === "FX" ? html`<b>FX</b>` : ic(t.icon, 13)}<span>${t.n ?? ""}</span></div>`;
      if (t.kind === "head") return html`<div class="trk head" style=${styleMap({ height: t.h + "px" })}>${tag}<div class="body">${t.name}</div>${meter}</div>`;
      const isSel = t.n === 11;
      const rw = html`<div class="gg">${b("R", "Read", t.on ? "green" : "")}${b("W", "Write")}</div>`;
      let bt;
      if (t.kind === "bus") bt = html`<span class="vv">${t.val}</span><span class="ud">${ic("updown", 10)}</span>${rw}<div class="gg">${b(ic("edit"), "Edit channel")}${b(ic("link", 13), "Stereo")}</div><span class="vo">Volu</span>`;
      else bt = html`<div class="gg">${b(ic("rec", 11), "Record")}${b(ic("speaker", 10), "Monitor")}</div>
        ${t.kind === "folder" ? html`<div class="gg">${b(ic("eq"), "Group editing")}${b(ic("flow"), "Phase")}</div>` : html`<div class="gg">${b(ic("edit"), "Edit channel")}${b(ic(t.kind === "audio" ? "link" : t.mid ?? "keys", t.kind === "audio" ? 13 : 11), "Instrument", isSel ? "inv" : "")}</div>${rw}<div class="gg one">${b(ic("lanes"), "Lanes")}</div>`}`;
      return html`<div class=${classMap({ trk: true, sel1: isSel })} style=${styleMap({ height: t.h + "px" })}>${tag}
        <div class="body"><div class="ms">${b("M", "Mute")}${b("S", "Solo")}</div>
        <div class="nfo"><div class="nm1">${t.name}</div><div class="bt">${bt}</div></div>${isSel ? html`<div class="pic"></div>` : nothing}</div>${meter}</div>`;
    });
  }

  ruler() {
    return html`<svg class="ruler" width="100%" height="58" aria-label="Ruler">
      <rect y="2" width="100%" height="22" fill="#17181a"></rect>
      <rect x=${X(21)} y="2" width=${X(27) - X(21)} height="22" fill="#7359e0"></rect>
      <rect x=${X(21)} y="24" width=${X(27) - X(21)} height="17" fill="#262d38"></rect>
      ${range(17.875, 29.6, 0.125).map((v) => { const k = Math.round(v * 8) % 8; return svg`
        <rect x=${X(v)} y="24" width="1" height="17" fill=${k % 2 === 0 ? "#45494d" : "#2e3236"}></rect>
        ${k % 2 === 0 ? svg`<rect x=${X(v)} y="2" width="1" height=${k === 0 ? 22 : 8} fill="#e8e8e8"></rect>` : nothing}`; })}
      ${range(18, 30, 1).map((n) => svg`<text x=${X(n) + 4} y="21">${n}</text>`)}
      <path d="M${X(21)} 2h9l-9 9zM${X(27)} 2h-9l9 9z" fill="#fff"></path>
      <rect y="41" width="100%" height="17" fill="#7d7e7e"></rect>
      ${range(0, 24, 1).map((i) => svg`<rect x=${143 + (i - 1) * 72} y="41" width="1" height=${i % 5 === 1 ? 6 : 3} fill="#3c3d3e"></rect>`)}
      ${[35, 40, 45, 50, 55].map((s, i) => svg`<rect x=${143 + i * 359} y="41" width="1" height="17" fill="#3c3d3e" opacity=${i % 2 ? 1 : 0}></rect><text class="s" x=${147 + i * 359} y="54">${s}</text>`)}
      <rect x=${X(23)} y="2" width="1" height="56" fill="#f4f4f4"></rect>
    </svg>`;
  }

  channel() {
    const sc: [string, number][] = [["6", 28], ["0", 80], ["5", 127], ["10", 163], ["15", 190], ["20", 211], ["30", 239], ["40", 254], ["50", 263], ["00", 274]];
    return html`<section class="chan">
      <div class="tabs">${b("Channel", "Channel", "on")}</div>
      <div class="panel">
        <div class="strip"><div class="nm">Drums</div>${b(ic("out"), "Output")}</div>
        <div class="eq"><i></i></div>
        <button class="sec mt15"><span class="t">Routing</span><span class="x">${ic("split", 10)}</span></button>
        <div class="box cbox mt7"><div class="r"><span class="grow">MIDI Inputs</span>${b(ic("shuffle"), "Shuffle")}</div><div class="r">Drums</div></div>
        <button class="sec mt10"><span class="t">Inserts</span><span class="x">${ic("insert", 10)}</span></button>
        <button class="sec mt39"><span class="t">Sends</span><span class="x">${ic("send", 10)}</span></button>
        <div class="drag"><i></i><i></i><i></i><i></i></div>
        <div class="cells">${b("M", "Mute")}${b("S", "Solo")}${b("L", "Listen", "dim")}${b(ic("edit"), "Edit")}</div>
        <div class="panbox"><i></i>C</div>
        <div class="fad"><svg width="79" height="302">
          <rect x="3" y="20" width="3" height="260" fill="#121314"></rect><rect x="32" width="1" height="302" fill="#2a2c2e"></rect>
          ${sc.map(([t, y]) => svg`<rect x="6" y=${y} width="16" height="1" fill="#55575a"></rect><text x="29" y=${y + 3} text-anchor="end">${t}</text>`)}
          ${[28, 63].map((y) => svg`<rect x="37" y=${y} width="39" height="1" fill="#3c3e40"></rect><text x="57" y=${y + 3} text-anchor="middle" style="fill:#4c4e50">${y < 40 ? "0" : "6"}</text>`)}
          <defs><linearGradient id="lv" x1="0" x2="0" y1="0" y2="1"><stop offset="0" stop-color="#2df0ae"></stop><stop offset="1" stop-color="#18d8f8"></stop></linearGradient>
          <linearGradient id="fc" x1="0" x2="0" y1="0" y2="1"><stop offset="0" stop-color="#777"></stop><stop offset=".12" stop-color="#ddd"></stop><stop offset=".88" stop-color="#bbb"></stop><stop offset=".9" stop-color="#777"></stop></linearGradient></defs>
          <rect x="36" y="101" width="20" height="193" fill="url(#lv)"></rect><rect x="57" y="97" width="19" height="197" fill="url(#lv)"></rect>
          ${[136, 172, 203, 245].map((y) => svg`<rect x="36" y=${y} width="40" height="1" fill="#0a7a80" opacity=".35"></rect>`)}
          <rect x="-8" y="125" width="23" height="49" fill="url(#fc)"></rect><rect y="149" width="14" height="1" fill="#222"></rect><path d="M0 138h14M0 143h14M0 155h14M0 160h14" stroke="#888"></path>
        </svg></div>
        <div class="cells"><span class="val">-8.00</span><span class="val">-5.9</span></div>
        <div class="cells">${b("R", "Read", "green")}${b("W", "Write")}${b(ic("rec"), "Record")}${b(ic("speaker"), "Monitor")}</div>
        <div class="num">${ic("link", 12)}<span>11</span></div>
        <div class="foot">Drums</div>
      </div>
    </section>`;
  }

  inspector() {
    return html`<section class="insp">
      <div class="tabs">${b("Inspector", "Inspector", "on")}${b("Visibility", "Visibility", "mid")}${b("=", "Menu", "menu")}</div>
      <div class="panel">
        <div class="strip"><div class="nm">${ic("caret", 7)}Drums</div>${b(ic("edit"), "Edit", "lite")}</div>
        <div class="ibtn">${b("M", "Mute")}${b("S", "Solo")}${b("R", "Read", "green")}${b("W", "Write")}${b("L", "Listen", "dim")}${b(ic("grid", 11), "Pattern", "white")}
          ${b(ic("rec"), "Record")}${b(ic("speaker"), "Monitor")}${b(ic("note"), "Time base", "tan")}${b(ic("unlock"), "Lock")}${b(ic("lanes"), "Lanes")}${b(ic("star"), "Freeze")}</div>
        <div class="box mt10">
          <div class="r">${ic("ramp", 10)}<input class="fill" type="range" aria-label="Volume"><span class="v">-8.00 dB</span></div>
          <div class="r">${ic("pan", 10)}<input type="range" aria-label="Pan"><span class="v">C</span></div>
          <div class="r">${ic("delay", 11)}<span class="grow"></span><span class="v">0.00 ms</span></div>
        </div>
        <div class="box mt10"><div class="r">${ic("pattern", 11)}${sel("Event type", "Pattern Event")}</div></div>
        <div class="box mt8"><div class="r">${ic("palette", 11)}${sel("Preset", "Beat Starter 01")}</div></div>
        <div class="box mt8 ital"><div class="r">${ic("clock", 11)}${sel("Recording", "Insert Recording...")}</div></div>
        <button class="sec mt10">${ic("caret", 7)}<span class="t">Routing</span><span class="x">${ic("split", 10)}</span></button>
        <div class="box mt5"><div class="r">${ic("inn", 11)}${sel("Input", "All MIDI Inputs")}${b(ic("shuffle", 11), "Shuffle")}</div><div class="r">${ic("out", 11)}${sel("Output", "Drums")}</div></div>
        <button class="sec mt10">${ic("caretR", 7)}<span class="t">Track Versions</span><span class="x">${ic("bars", 10)}</span></button>
        <button class="sec mt6">${ic("caretR", 7)}<span class="t">MIDI Inserts</span><span class="x">${ic("insert", 10)}</span></button>
        <button class="sec mt6">${ic("caretR", 7)}<span class="t">QC</span><span class="x">${ic("ring", 11)}</span></button>
      </div>
      <div class="tabs low">${b("Track", "Track", "on")}${b("Editor", "Editor", "mid")}</div>
    </section>`;
  }

  lower() {
    const wave: string[] = [];
    for (let i = 0; i <= 482; i++) {
      const t = i / 482, a = 18 * Math.exp(-t * 4.2);
      wave.push(`${i / 2} ${(21 - a * Math.sin(t * Math.PI * 60)).toFixed(2)}`);
    }
    return html`<section class="lower">
      <div class="panel lz">
        <div class="lbar">
          ${b(ic("undoA"), "Undo", "l21")}${b(ic("redoA"), "Redo", "l21")}<span class="m3"></span>${b("R", "Read", "l21 g2")}${b("W", "Write", "l21")}
          <div class="preset"><span>Track Preset Name</span>${b(ic("cube", 14), "Load preset")}</div>
          ${b("Instrument", "Instrument", "m11 w73 white")}${b("Pad FX", "Pad FX", "m3 w60")}${b("Group", "Group", "m12 w60")}
          ${b("Delay", "Delay", "m12 w60")}${b(ic("power", 13), "Delay on", "l21 white")}${b("Reverb", "Reverb", "m3 w60")}${b(ic("power", 13), "Reverb on", "l21 white")}
          ${b(ic("bolt", 13), "Quick", "sq m22")}${b(ic("disc", 15), "Kits", "sq")}${b(html`<b>FX</b>`, "FX", "sq")}
          <span class="grow"></span>
          ${b(ic("fit1", 13), "Fit kit", "l21")}${b(ic("fit2", 13), "Fit pads", "l21")}${b(ic("check", 13), "Apply", "l21")}
          ${b(ic("cube", 14), "Browse", "sq")}${b(ic("folder", 15), "Open folder", "sq")}${b(ic("arrowNE", 12), "Open window", "sq")}
        </div>
        <div class="lbody">
          <div class="pads">
            <div class="banks">${range(0, 8, 1).map((i) => i === 2 ? html`<div class="bank cur">${PADS.map((p) => html`<i style=${styleMap({ background: PC[p[2]] })}></i>`)}</div>` : html`<div class="bank"></div>`)}</div>
            <div class="padg">${PADS.map(([n, name, c, glow]) => html`<button class=${classMap({ pad: true, glow: !!glow, cur: n === "C1" })} style=${styleMap({ backgroundColor: PC[c] })}>
              <div class="tp"><i>M</i><i>S</i><span>${n}</span></div><div class="pn">${name}</div></button>`)}</div>
          </div>
          <div class="synth">
            <div class="top">
              <div class="slots">${["Kick 1", "", "", ""].map((s, i) => html`<div class=${classMap({ slot: true, on: i === 0 })}><div class="sb"><span class="p">${ic("power", 10)}</span>${s}</div>
                <svg width="16" height="16"><circle cx="8" cy="8" r="8" fill=${i ? "#3b3d40" : "#cfd0d1"}></circle><path d="M8 0v8" stroke="#17181a" stroke-width="2"></path></svg></div>`)}</div>
              <div class="osc">${sel("Layer", "Kick 1")}
                <svg width="42" height="44" viewBox="-21 -21 42 44"><path d="M-13 13L-19 22M13 13L19 22" stroke="#c9cacb" stroke-width="3"></path><circle r="17" fill="#cfd0d1" stroke="#18191b"></circle><path d=${arc(18, -140, 140)} fill="none" stroke="#d6d7d8" stroke-width="2.500"></path><circle r="15" fill="none" stroke="#222" stroke-width="1"></circle><path d="M0 6v9" stroke="#18191b" stroke-width="4"></path></svg>
              </div>
              <svg class="wv" width="242" height="42"><path d=${"M0 21L" + wave.join("L") + "L241 21z"} fill="#c4c5c6" stroke="#c4c5c6"></path></svg>
              <div class="padpart"><div class="ptitle"><i></i>PAD<i></i></div>
                <div class="prow">${b(ic("pulse", 12), "Gate")}${knob("Level", "white", 90)}${knob("Pan", "white", 0, true, true)}${knob("Delay", "white", -135)}${knob("Reverb", "white", -135)}<div class="vm"><i></i><i></i></div></div>
              </div>
            </div>
            <div class="secs">
              <div class="sc"><h3>OSCILLATOR</h3><div class="kr">${knob("Tune", "red", 0, false, true)}${knob("Tone", "blue", -135, true)}</div></div>
              <div class="sc"><h3>CLICK</h3><div class="kr">${knob("Click", "blue", 55)}${knob("Color", "blue", 135, true)}</div></div>
              <div class="sc"><h3>PITCH</h3><div class="kg k3">${knob("Decay", "red", 0, false, false, true)}<div class="ghost">${ic("steps", 14)}</div>${knob("Env Depth", "red", -125, true)}${knob("Punch", "red", -80, true)}<div class="ghost c"></div></div></div>
              <div class="sc"><h3>AMP ENV</h3><div class="kg k2">${knob("Decay", "green", 0, false, false, true)}${knob("Accent", "green", -135, true)}${knob("Vel > Lev", "green", 135, true)}</div></div>
              <div class="sc"><h3>DIST</h3><div class="kg k1">${knob("Distortion", "green", -90)}${knob("Offset", "green", -80, true)}</div></div>
              <div class="sc"><h3>AMPLIFIER</h3><div class="kg k2">${knob("Level", "green", 0)}${knob("FX", "white", 135)}${knob("Pan", "green", 0, true, true)}${knob("Tone", "green", 135, true)}</div></div>
            </div>
          </div>
        </div>
      </div>
      <nav class="lowtabs">${b(ic("cross", 11), "Close", "x")}${["MixConsole", "Editor", "Drum Machine", "Sampler Control", "Chord Pads", "MIDI Remote", "Modulators"].map((t) => b(t, t, t === "Drum Machine" ? "on" : ""))}</nav>
    </section>`;
  }

  media() {
    const w = (y: number) => wavePath(3, 90, y, (t) => (t < 0.2 ? 9 : 9 * Math.exp(-(t - 0.2) * 5)) * (0.6 + 0.4 * Math.abs(Math.sin(t * 70))));
    return html`<section class="media">
      <div class="tabs">${b("VSTi", "VSTi")}${b("Media", "Media", "on")}${b("CR", "CR", "cr")}${b("Meter", "Meter", "me")}</div>
      <div class="panel mp">
        <div class="sr"><label>${ic("search")}<input placeholder="Search" aria-label="Search"></label>${b(ic("cross", 10), "Clear")}<span class="z"></span></div>
        <div class="crumb">${b(ic("back", 13), "Back")}<span class="g0">${ic("home", 13)}${ic("caretR", 7)}</span><a href="#loops">Loops &amp; Samples</a>${ic("caretR", 7)}<a href="#vault">Hip Hop Vault</a></div>
        <div class="ft">${sel("Media type", "All Media Types")}${b(ic("rew", 11), "Reset")}${b(ic("shuffle", 11), "Shuffle")}${b(ic("gear", 11), "Settings", "black")}${b(ic("z2", 13), "Columns")}</div>
        <div class="tw"><table><colgroup><col class="c1"><col></colgroup><thead><tr><th><div class="row"><span class="dim">${ic("sort", 9)}</span>Name</div></th><th>Tempo</th></tr></thead>
          <tbody>${MEDIA.map(([n, t]) => html`<tr class=${n === "Hip Hop - Snare 06" ? "cur" : ""}><td><div class="row">${ic("wave", 14)}<span>${n}</span></div></td><td>${t}</td></tr>`)}</tbody></table></div>
        <div class="ms2"><i></i></div>
        <div class="prev">
          <svg class="cover" width="41" height="40"><defs><linearGradient id="cv" x1="0" x2="0" y1="0" y2="1"><stop offset="0" stop-color="#333"></stop><stop offset=".4" stop-color="#ccc"></stop><stop offset=".7" stop-color="#444"></stop><stop offset="1" stop-color="#999"></stop></linearGradient></defs>
            <rect width="41" height="40" fill="url(#cv)"></rect><path d="M0 22l9-5v12l-9 4zM41 24l-7-4v8l7 3z" fill="#777"></path><rect x="8" y="10" width="25" height="21" fill="#484848" stroke="#ddd"></rect><text class="ct" x="20" y="20" text-anchor="middle">HIP HOP</text><text class="ct big" x="20" y="28" text-anchor="middle">VAULT</text></svg>
          <svg width="260" height="56"><rect x="1" width="1" height="40" fill="#fff"></rect><path d=${w(10)} fill="#eee"></path><path d=${w(28)} fill="#eee"></path><path d="M2 10.500H260M2 28.500H260" stroke="#ddd"></path>
            ${[47, 91, 136, 181, 226].map((x) => svg`<rect x=${x} width="1" height=${x > 200 ? 14 : 10} fill=${x > 200 ? "#bbb" : "#444"}></rect>`)}
            <text x="229" y="36">0.5</text><text x="187" y="50">Hip Hop - Snare 06</text></svg>
        </div>
        <div class="pl"><div class="gr">${b(ic("play", 11), "Play")}${b(ic("stop", 12), "Stop", "white")}${b(ic("loop", 12), "Loop")}</div>
          <label class="vol">${ic("ramp", 11)}<input type="range" value="66" aria-label="Preview volume">-3.00 dB</label>
          <div class="gr">${b(html`<b>D</b>`, "Align beats", "white")}${b(ic("rew", 11), "Skip")}</div></div>
        <div class="pl z"><div class="gr">${b(ic("steps", 11), "Steps")}<span class="hb"><b>-</b><span>- &nbsp;▾</span></span></div><div class="gr">${b(ic("note", 11), "Note")}${b("1/2", "Half")}${b("2x", "Double")}${b(ic("link", 11), "Link")}</div></div>
      </div>
    </section>`;
  }

  render() {
    return html`
      <div class="title"><div class="lights"><i></i><i></i></div></div>
      <header class="tools">
        ${b(ic("redo", 13), "Redo", "first")}
        <div class="toolset">
          <div class="g bold">${b("M", "Mute")}${b("S", "Solo")}${b("L", "Listen", "dim")}${b("R", "Read", "green")}${b("W", "Write")}${b("A", "All")}</div>
          <div class="g s4">${b(ic("auto", 14), "Automation", "white")}${sel("Automation mode", "Touch", "w-touch")}${b(ic("edit", 13), "Automation panel", "e")}</div>
          <div class="g s4">${b(ic("scroll", 13), "Auto-scroll", "orange")}${b(ic("caret", 10), "Scroll options", "black dd")}</div>
          <div class="g s6 toolbox">${b(html`<b>:</b>`, "Combine tools", "orange nar")}${b(ic("cursor", 13), "Select", "white")}${b(ic("range", 13), "Range", "white")}${["pencil", "eraser", "scissors", "glue", "cross", "zoomg", "hand", "comb", "line", "speaker", "scrub"].map((n) => b(ic(n, 13), n))}</div>
          <div class="g s6 black">${b(ic("drop", 13), "Color")}${b(ic("caret", 10), "Color menu", "d15")}</div>
          <div class="g s6">${b(ic("curve", 14), "Crossfade")}</div>
          <div class="g s8">${b(ic("snap", 14), "Snap", "white")}${sel("Snap type", "Grid", "w-grid")}</div>
          <div class="g s6"><span class="sel w-adapt">${ic("hash", 12)}<select aria-label="Grid type"><option>Adapt to Zoom</option></select>${ic("caret", 9)}</span></div>
          <div class="g s6">${b(html`<b>Q</b>`, "Quantize")}${sel("Quantize preset", "1/16", "w-q")}${b(ic("frac", 12), "Apply")}${b(ic("flag", 12), "Soft")}${b(ic("edit", 12), "Quantize panel")}</div>
          <div class="g">${b(ic("align", 13), "Align")}</div>
        </div>
        <div class="right"><div class="g">${b(ic("keyboard", 14), "Keyboard")}</div><div class="g white">${["z1", "z2", "z3", "z4"].map((z) => b(ic(z, 14), "Zone " + z))}</div></div>
      </header>
      <main class="main">
        ${this.channel()}${this.inspector()}
        <div class="center">
          <section class="project">
            <div class="list">
              <div class="lhead">${b(ic("plus", 12), "Add track")}${b(ic("palette", 12), "Track preset")}<span class="cnt">27 / 27</span>${b(ic("house", 13), "Home", "black")}${b(ic("list", 13), "Divide", "black")}<span class="s10"></span>${b(ic("search", 12), "Find track")}</div>
              <div class="io"><div class="k">${ic("folder", 13)}</div><div class="l">Input/Output</div><div class="mt only"></div></div>
              <div class="io"><div class="k">${ic("ruler", 13)}</div><div class="l">Seconds</div>${b(ic("right", 10), "Go")}<span class="tc">0:00:00.000</span>${b(ic("tee", 11), "Type")}<div class="mt"></div></div>
              ${this.tracks()}
              <div class="lfoot"><span>-</span>${ic("caret", 9)}${ic("gear", 11)}</div>
            </div>
            <div class="div"><i></i><i></i><i></i><i></i></div>
            <div class="time">${this.ruler()}${TRACKS.map(lane)}
              <div class="hs">${ic("lt", 9)}<div class="track"><span class="thumb"></span></div>${ic("gt", 9)}${ic("caret", 8)}${ic("minus", 9)}<span class="zs"><i class="dot"></i></span>${ic("plus", 9)}</div>
            </div>
            <div class="vs">${ic("caret", 9)}<span class="mt7"></span>${ic("pencil", 8)}<span class="zl"></span><i class="dot"></i><span class="mt5"></span>${ic("up", 9)}<span class="thumb"></span><span class="grow"></span>${ic("down", 9)}<span class="mt5"></span>${ic("caret", 8)}<span class="zl a"></span><i class="dot"></i><span class="zl c"></span>${ic("plus", 9)}</div>
          </section>
          ${this.lower()}
        </div>
        ${this.media()}
      </main>
      <footer class="trans">
        <div class="tg l">${b(html`${ic("rec", 14)}${ic("caret", 9)}`, "Record mode", "w35")}<span class="dots"></span>${b(html`${ic("wave", 14)}${ic("caret", 9)}`, "Audio mode", "w35")}<span class="dots"></span>${b(html`${ic("disc", 14)}${ic("caret", 9)}`, "MIDI mode", "w35")}<span class="dots"></span>${b("AQ", "Auto quantize", "w33 aq")}</div>
        <div class="tg m">${b(ic("locL", 12), "Left locator")}<span class="num1">21.  1.  1.    0</span><span class="s10"></span>${b(ic("locR", 12), "Right locator")}<span class="num1">27.  1.  1.    0</span><span class="s6"></span>${b(ic("lock", 13), "Lock", "white")}${b(ic("hour", 12), "Punch in")}${b(ic("man", 12), "Punch out")}<span class="dots in2"></span>
          ${b(ic("loop", 14), "Cycle", "big purple")}${b(ic("pulse", 14), "Stop", "big gry")}${b(ic("play", 15), "Play", "big play")}${b(ic("circ", 14), "Record", "big gry")}<span class="s6"></span><span class="dots"></span>${b(ic("delay", 12), "Preroll")}<span class="dots"></span>${b(ic("note", 12), "Time")}<span class="num1 pos">22.  4.  4.111</span><span class="s10"></span>${b(ic("metro", 12), "Tempo")}<span class="num1 bpm">122.500</span><span class="s10"></span>${b("Tap", "Tap tempo", "big")}${b(ic("caret", 8), "More")}</div>
        <div class="tg e">${b(ic("metro", 13), "Metronome")}${b(ic("gear", 11), "Setup")}<span class="dots"></span></div><div class="out"></div>
      </footer>`;
  }
}
